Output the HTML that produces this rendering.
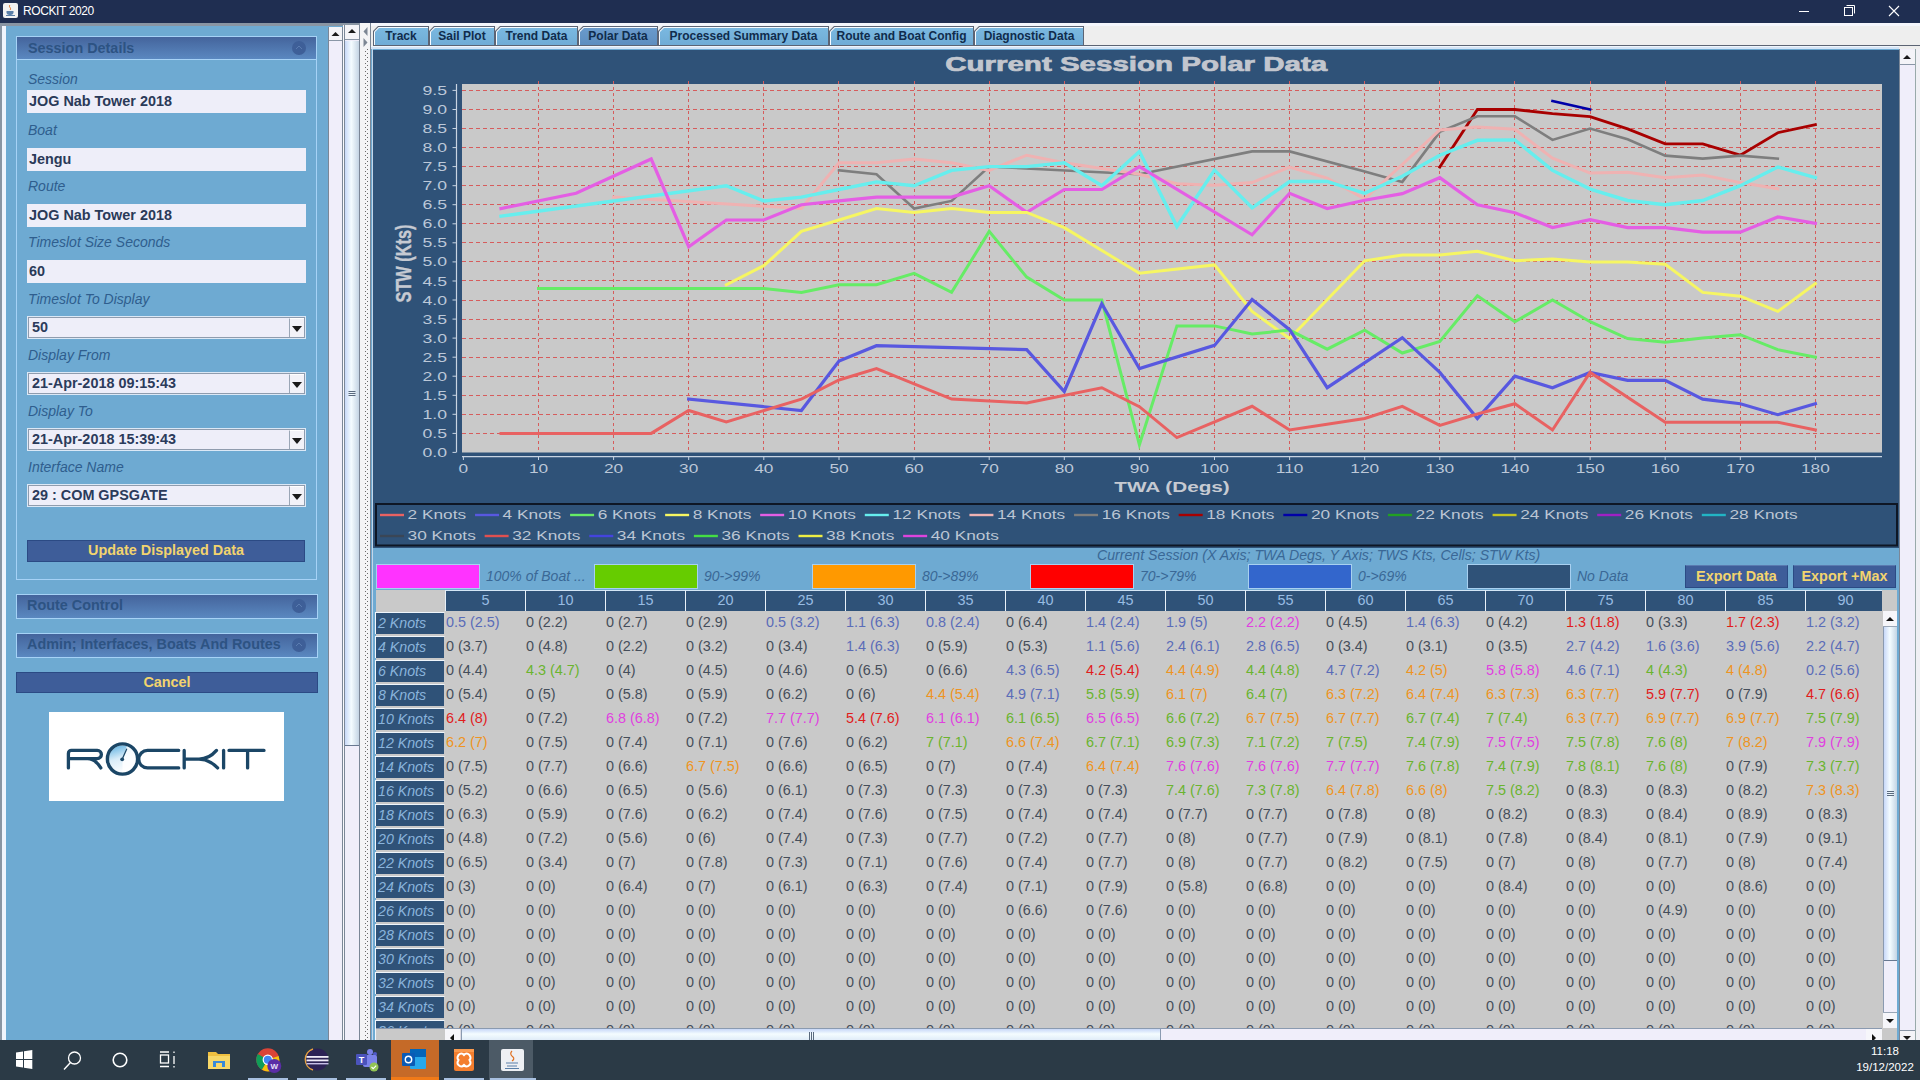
<!DOCTYPE html><html><head><meta charset="utf-8"><style>
html,body{margin:0;padding:0;}
body{width:1920px;height:1080px;overflow:hidden;position:relative;background:#6eaad2;font-family:"Liberation Sans", sans-serif;}
div{box-sizing:border-box;}
</style></head><body>
<div style="position:absolute;left:0px;top:0px;width:1920px;height:23px;background:#1f2e51;"></div>
<div style="position:absolute;left:3px;top:3px;width:15px;height:15px;background:#f2f2f2;border-radius:2px;"><svg width="15" height="15" viewBox="0 0 15 15" style="position:absolute;left:0;top:0"><path d="M7 2 C5 4 9 5 7 7" stroke="#e07020" stroke-width="1" fill="none"/><path d="M3.5 8 h7 v2 a3 3 0 0 1 -3 2 h-1 a3 3 0 0 1 -3 -2z" fill="#5a7fa8"/><path d="M3 12.5 h9" stroke="#5a7fa8" stroke-width="1"/></svg></div>
<div style="position:absolute;left:23px;top:5.14px;font-size:12px;line-height:1;white-space:nowrap;color:#ffffff;letter-spacing:-0.4px;">ROCKIT 2020</div>
<svg width="120" height="23" style="position:absolute;left:1790px;top:0" viewBox="0 0 120 23"><path d="M9 11.5 h10" stroke="#fff" stroke-width="1"/><rect x="54.5" y="7.5" width="8" height="8" fill="none" stroke="#fff" stroke-width="1"/><path d="M56.5 5.5 h8 v8" fill="none" stroke="#fff" stroke-width="1"/><path d="M99 6 l10 10 M109 6 l-10 10" stroke="#fff" stroke-width="1.1"/></svg>
<div style="position:absolute;left:0px;top:23px;width:360px;height:3px;background:#8995a3;"></div>
<div style="position:absolute;left:0px;top:26px;width:2px;height:1014px;background:#8995a3;"></div>
<div style="position:absolute;left:2px;top:26px;width:4px;height:1014px;background:#f0f4fc;"></div>
<div style="position:absolute;left:6px;top:26px;width:322px;height:1014px;background:#6eaad2;"></div>
<div style="position:absolute;left:16px;top:36px;width:301px;height:544px;border:1px solid #a6d2f6;"></div>
<div style="position:absolute;left:17px;top:37px;width:299px;height:23px;background:linear-gradient(#44649c,#5a88c0);border-bottom:1px solid #a6d2f6;"></div>
<div style="position:absolute;left:28px;top:41.47px;font-size:14.4px;line-height:1;white-space:nowrap;font-weight:bold;color:#2d5383;">Session Details</div>
<svg width="16" height="16" style="position:absolute;left:291px;top:40px" viewBox="0 0 16 16"><circle cx="8" cy="8" r="7" fill="#3e5f98"/><path d="M5 9 l3 -3 l3 3" stroke="#5a7cb0" stroke-width="1" fill="none"/></svg>
<div style="position:absolute;left:28px;top:72.33px;font-size:14px;line-height:1;white-space:nowrap;font-style:italic;color:#2f5e8e;">Session</div>
<div style="position:absolute;left:27px;top:90px;width:279px;height:23px;background:#eeeef9;"></div>
<div style="position:absolute;left:29px;top:94.47px;font-size:14.4px;line-height:1;white-space:nowrap;font-weight:bold;color:#2a3a58;">JOG Nab Tower 2018</div>
<div style="position:absolute;left:28px;top:123.33px;font-size:14px;line-height:1;white-space:nowrap;font-style:italic;color:#2f5e8e;">Boat</div>
<div style="position:absolute;left:27px;top:148px;width:279px;height:23px;background:#eeeef9;"></div>
<div style="position:absolute;left:29px;top:152.47px;font-size:14.4px;line-height:1;white-space:nowrap;font-weight:bold;color:#2a3a58;">Jengu</div>
<div style="position:absolute;left:28px;top:179.33px;font-size:14px;line-height:1;white-space:nowrap;font-style:italic;color:#2f5e8e;">Route</div>
<div style="position:absolute;left:27px;top:204px;width:279px;height:23px;background:#eeeef9;"></div>
<div style="position:absolute;left:29px;top:208.47px;font-size:14.4px;line-height:1;white-space:nowrap;font-weight:bold;color:#2a3a58;">JOG Nab Tower 2018</div>
<div style="position:absolute;left:28px;top:235.33px;font-size:14px;line-height:1;white-space:nowrap;font-style:italic;color:#2f5e8e;">Timeslot Size Seconds</div>
<div style="position:absolute;left:27px;top:260px;width:279px;height:23px;background:#eeeef9;"></div>
<div style="position:absolute;left:29px;top:264.47px;font-size:14.4px;line-height:1;white-space:nowrap;font-weight:bold;color:#2a3a58;">60</div>
<div style="position:absolute;left:28px;top:292.33px;font-size:14px;line-height:1;white-space:nowrap;font-style:italic;color:#2f5e8e;">Timeslot To Display</div>
<div style="position:absolute;left:27px;top:316px;width:279px;height:23px;background:#eeeef9;border:1px solid #dbe8f6;"></div>
<div style="position:absolute;left:28px;top:317px;width:277px;height:21px;border:1px solid #8f9cae;"></div>
<div style="position:absolute;left:32px;top:319.97px;font-size:14.4px;line-height:1;white-space:nowrap;font-weight:bold;color:#2b3b5b;">50</div>
<div style="position:absolute;left:289px;top:318px;width:15px;height:19px;background:#f2f2f8;border-left:1px solid #9aa6b6;border-top:1px solid #fff;"><svg width="12" height="8" style="position:absolute;left:1px;top:6px"><path d="M1 1 h10 l-5 6z" fill="#1a1a1a"/></svg></div>
<div style="position:absolute;left:28px;top:348.33px;font-size:14px;line-height:1;white-space:nowrap;font-style:italic;color:#2f5e8e;">Display From</div>
<div style="position:absolute;left:27px;top:372px;width:279px;height:23px;background:#eeeef9;border:1px solid #dbe8f6;"></div>
<div style="position:absolute;left:28px;top:373px;width:277px;height:21px;border:1px solid #8f9cae;"></div>
<div style="position:absolute;left:32px;top:375.97px;font-size:14.4px;line-height:1;white-space:nowrap;font-weight:bold;color:#2b3b5b;">21-Apr-2018 09:15:43</div>
<div style="position:absolute;left:289px;top:374px;width:15px;height:19px;background:#f2f2f8;border-left:1px solid #9aa6b6;border-top:1px solid #fff;"><svg width="12" height="8" style="position:absolute;left:1px;top:6px"><path d="M1 1 h10 l-5 6z" fill="#1a1a1a"/></svg></div>
<div style="position:absolute;left:28px;top:404.33px;font-size:14px;line-height:1;white-space:nowrap;font-style:italic;color:#2f5e8e;">Display To</div>
<div style="position:absolute;left:27px;top:428px;width:279px;height:23px;background:#eeeef9;border:1px solid #dbe8f6;"></div>
<div style="position:absolute;left:28px;top:429px;width:277px;height:21px;border:1px solid #8f9cae;"></div>
<div style="position:absolute;left:32px;top:431.97px;font-size:14.4px;line-height:1;white-space:nowrap;font-weight:bold;color:#2b3b5b;">21-Apr-2018 15:39:43</div>
<div style="position:absolute;left:289px;top:430px;width:15px;height:19px;background:#f2f2f8;border-left:1px solid #9aa6b6;border-top:1px solid #fff;"><svg width="12" height="8" style="position:absolute;left:1px;top:6px"><path d="M1 1 h10 l-5 6z" fill="#1a1a1a"/></svg></div>
<div style="position:absolute;left:28px;top:460.33px;font-size:14px;line-height:1;white-space:nowrap;font-style:italic;color:#2f5e8e;">Interface Name</div>
<div style="position:absolute;left:27px;top:484px;width:279px;height:23px;background:#eeeef9;border:1px solid #dbe8f6;"></div>
<div style="position:absolute;left:28px;top:485px;width:277px;height:21px;border:1px solid #8f9cae;"></div>
<div style="position:absolute;left:32px;top:487.97px;font-size:14.4px;line-height:1;white-space:nowrap;font-weight:bold;color:#2b3b5b;">29 : COM GPSGATE</div>
<div style="position:absolute;left:289px;top:486px;width:15px;height:19px;background:#f2f2f8;border-left:1px solid #9aa6b6;border-top:1px solid #fff;"><svg width="12" height="8" style="position:absolute;left:1px;top:6px"><path d="M1 1 h10 l-5 6z" fill="#1a1a1a"/></svg></div>
<div style="position:absolute;left:27px;top:540px;width:278px;height:22px;background:#3e5d99;border:1px solid #2b4a84;"></div>
<div style="position:absolute;left:27px;top:540px;width:278px;height:22px;line-height:21px;text-align:center;font-size:14.4px;font-weight:bold;color:#f2d46e;">Update Displayed Data</div>
<div style="position:absolute;left:16px;top:594px;width:302px;height:25px;border:1px solid #a6d2f6;background:linear-gradient(#44649c,#5a88c0);"></div>
<div style="position:absolute;left:27px;top:598.47px;font-size:14.4px;line-height:1;white-space:nowrap;font-weight:bold;color:#2d5383;">Route Control</div>
<svg width="16" height="16" style="position:absolute;left:291px;top:598px" viewBox="0 0 16 16"><circle cx="8" cy="8" r="7" fill="#3e5f98"/><path d="M5 9 l3 -3 l3 3" stroke="#5a7cb0" stroke-width="1" fill="none"/></svg>
<div style="position:absolute;left:16px;top:633px;width:302px;height:25px;border:1px solid #a6d2f6;background:linear-gradient(#44649c,#5a88c0);"></div>
<div style="position:absolute;left:27px;top:637.47px;font-size:14.4px;line-height:1;white-space:nowrap;font-weight:bold;color:#2d5383;">Admin; Interfaces, Boats And Routes</div>
<svg width="16" height="16" style="position:absolute;left:291px;top:637px" viewBox="0 0 16 16"><circle cx="8" cy="8" r="7" fill="#3e5f98"/><path d="M5 9 l3 -3 l3 3" stroke="#5a7cb0" stroke-width="1" fill="none"/></svg>
<div style="position:absolute;left:16px;top:672px;width:302px;height:21px;background:#3e5d99;border:1px solid #2b4a84;"></div>
<div style="position:absolute;left:16px;top:672px;width:302px;height:21px;line-height:20px;text-align:center;font-size:14.4px;font-weight:bold;color:#f2d46e;">Cancel</div>
<div style="position:absolute;left:49px;top:712px;width:235px;height:89px;background:#ffffff;"></div>
<svg width="235" height="89" style="position:absolute;left:49px;top:712px" viewBox="0 0 235 89">
<defs><linearGradient id="lg1" x1="0.3" y1="0" x2="0.6" y2="1"><stop offset="0" stop-color="#6cb8e4"/><stop offset="0.45" stop-color="#d8ecf8"/><stop offset="1" stop-color="#ffffff"/></linearGradient></defs>
<circle cx="73.5" cy="47" r="13.5" fill="url(#lg1)"/>
<path d="M73.5 47 L78 33.5 A13.5 13.5 0 0 1 87 47 A13.5 13.5 0 0 1 73.5 60.5z" fill="#ffffff" opacity="0.85"/>
<g fill="none" stroke="#1b4666" stroke-width="3.3" stroke-linecap="round" stroke-linejoin="round">
<path d="M19.4 55.9 V41.4 A3 3 0 0 1 22.4 38.4 H48.3 A4.1 4.1 0 0 1 48.3 46.6 H20.4 M38.5 46.6 Q46 46.6 51.8 55.9"/>
<circle cx="73.5" cy="47" r="15.1" stroke-width="3.4"/>
<path d="M129.7 38.4 H98.5 A8.75 8.75 0 0 0 98.5 55.9 H129.7"/>
<path d="M135.2 38.4 V55.9 M135.2 47.1 H150 Q160 47.1 167.5 38.4 M150 47.1 Q160 47.1 168.6 55.9"/>
<path d="M174.6 38.4 V55.9"/>
<path d="M180 38.4 H215 M198.6 38.4 V55.9"/>
</g>
<path d="M73.2 47.3 L77.6 37.2" stroke="#1d4a6a" stroke-width="1.3" stroke-linecap="round"/>
<circle cx="73.2" cy="47.3" r="1.9" fill="#1d4a6a"/>
</svg>
<div style="position:absolute;left:328px;top:27px;width:15px;height:1013px;background:#f0eefa;border-left:1px solid #7b8797;border-right:1px solid #7b8797;"></div>
<div style="position:absolute;left:329px;top:27px;width:13px;height:14px;background:#f4f4f8;border-bottom:1px solid #8a96a6;"><svg width="13" height="14" style="position:absolute;left:0;top:0"><path d="M2.5 9 h8 l-4 -4z" fill="#1a1a1a"/></svg></div>
<div style="position:absolute;left:343px;top:25px;width:1px;height:1015px;background:#f8f8fc;"></div>
<div style="position:absolute;left:344px;top:25px;width:16px;height:1015px;background:#f0eefa;border-left:1px solid #7b8797;border-right:1px solid #7b8797;"></div>
<div style="position:absolute;left:345px;top:25px;width:14px;height:15px;background:#f4f4f8;border-bottom:1px solid #8a96a6;"><svg width="14" height="15" style="position:absolute;left:0;top:0"><path d="M3 8 h8 l-4 -4z" fill="#1a1a1a"/></svg></div>
<div style="position:absolute;left:345px;top:41px;width:14px;height:705px;background:linear-gradient(90deg,#c8d8f8,#f4fcff 45%,#c4d4e4);border-bottom:1px solid #687890;"><svg width="14" height="8" style="position:absolute;left:0;top:349px"><path d="M3.5 1.5 h7 M3.5 3.5 h7 M3.5 5.5 h7" stroke="#5a6a7e" stroke-width="1"/></svg></div>
<div style="position:absolute;left:347px;top:1033px;width:10px;height:7px;"><svg width="10" height="7"><path d="M1 6 l4 -4 l4 4z" fill="#111"/></svg></div>
<div style="position:absolute;left:360px;top:23px;width:11px;height:1017px;background:#f4f4f6;border-right:1px solid #7b8797;"></div>
<svg width="1920" height="1080" style="position:absolute;left:0;top:0"><rect x="365" y="27" width="1" height="1" fill="#6a6a6a"/><rect x="367" y="29" width="1" height="1" fill="#6a6a6a"/><rect x="365" y="31" width="1" height="1" fill="#6a6a6a"/><rect x="367" y="33" width="1" height="1" fill="#6a6a6a"/><rect x="365" y="35" width="1" height="1" fill="#6a6a6a"/><rect x="367" y="37" width="1" height="1" fill="#6a6a6a"/><rect x="365" y="39" width="1" height="1" fill="#6a6a6a"/><rect x="367" y="41" width="1" height="1" fill="#6a6a6a"/><rect x="365" y="43" width="1" height="1" fill="#6a6a6a"/><rect x="367" y="45" width="1" height="1" fill="#6a6a6a"/><rect x="365" y="47" width="1" height="1" fill="#6a6a6a"/><rect x="367" y="49" width="1" height="1" fill="#6a6a6a"/><rect x="365" y="51" width="1" height="1" fill="#6a6a6a"/><rect x="367" y="53" width="1" height="1" fill="#6a6a6a"/><rect x="365" y="55" width="1" height="1" fill="#6a6a6a"/><rect x="367" y="57" width="1" height="1" fill="#6a6a6a"/><rect x="365" y="59" width="1" height="1" fill="#6a6a6a"/><rect x="367" y="61" width="1" height="1" fill="#6a6a6a"/><rect x="365" y="63" width="1" height="1" fill="#6a6a6a"/><rect x="367" y="65" width="1" height="1" fill="#6a6a6a"/><rect x="365" y="67" width="1" height="1" fill="#6a6a6a"/><rect x="367" y="69" width="1" height="1" fill="#6a6a6a"/><rect x="365" y="71" width="1" height="1" fill="#6a6a6a"/><rect x="367" y="73" width="1" height="1" fill="#6a6a6a"/><rect x="365" y="75" width="1" height="1" fill="#6a6a6a"/><rect x="367" y="77" width="1" height="1" fill="#6a6a6a"/><rect x="365" y="79" width="1" height="1" fill="#6a6a6a"/><rect x="367" y="81" width="1" height="1" fill="#6a6a6a"/><rect x="365" y="83" width="1" height="1" fill="#6a6a6a"/><rect x="367" y="85" width="1" height="1" fill="#6a6a6a"/><rect x="365" y="87" width="1" height="1" fill="#6a6a6a"/><rect x="367" y="89" width="1" height="1" fill="#6a6a6a"/><rect x="365" y="91" width="1" height="1" fill="#6a6a6a"/><rect x="367" y="93" width="1" height="1" fill="#6a6a6a"/><rect x="365" y="95" width="1" height="1" fill="#6a6a6a"/><rect x="367" y="97" width="1" height="1" fill="#6a6a6a"/><rect x="365" y="99" width="1" height="1" fill="#6a6a6a"/><rect x="367" y="101" width="1" height="1" fill="#6a6a6a"/><rect x="365" y="103" width="1" height="1" fill="#6a6a6a"/><rect x="367" y="105" width="1" height="1" fill="#6a6a6a"/><rect x="365" y="107" width="1" height="1" fill="#6a6a6a"/><rect x="367" y="109" width="1" height="1" fill="#6a6a6a"/><rect x="365" y="111" width="1" height="1" fill="#6a6a6a"/><rect x="367" y="113" width="1" height="1" fill="#6a6a6a"/><rect x="365" y="115" width="1" height="1" fill="#6a6a6a"/><rect x="367" y="117" width="1" height="1" fill="#6a6a6a"/><rect x="365" y="119" width="1" height="1" fill="#6a6a6a"/><rect x="367" y="121" width="1" height="1" fill="#6a6a6a"/><rect x="365" y="123" width="1" height="1" fill="#6a6a6a"/><rect x="367" y="125" width="1" height="1" fill="#6a6a6a"/><rect x="365" y="127" width="1" height="1" fill="#6a6a6a"/><rect x="367" y="129" width="1" height="1" fill="#6a6a6a"/><rect x="365" y="131" width="1" height="1" fill="#6a6a6a"/><rect x="367" y="133" width="1" height="1" fill="#6a6a6a"/><rect x="365" y="135" width="1" height="1" fill="#6a6a6a"/><rect x="367" y="137" width="1" height="1" fill="#6a6a6a"/><rect x="365" y="139" width="1" height="1" fill="#6a6a6a"/><rect x="367" y="141" width="1" height="1" fill="#6a6a6a"/><rect x="365" y="143" width="1" height="1" fill="#6a6a6a"/><rect x="367" y="145" width="1" height="1" fill="#6a6a6a"/><rect x="365" y="147" width="1" height="1" fill="#6a6a6a"/><rect x="367" y="149" width="1" height="1" fill="#6a6a6a"/><rect x="365" y="151" width="1" height="1" fill="#6a6a6a"/><rect x="367" y="153" width="1" height="1" fill="#6a6a6a"/><rect x="365" y="155" width="1" height="1" fill="#6a6a6a"/><rect x="367" y="157" width="1" height="1" fill="#6a6a6a"/><rect x="365" y="159" width="1" height="1" fill="#6a6a6a"/><rect x="367" y="161" width="1" height="1" fill="#6a6a6a"/><rect x="365" y="163" width="1" height="1" fill="#6a6a6a"/><rect x="367" y="165" width="1" height="1" fill="#6a6a6a"/><rect x="365" y="167" width="1" height="1" fill="#6a6a6a"/><rect x="367" y="169" width="1" height="1" fill="#6a6a6a"/><rect x="365" y="171" width="1" height="1" fill="#6a6a6a"/><rect x="367" y="173" width="1" height="1" fill="#6a6a6a"/><rect x="365" y="175" width="1" height="1" fill="#6a6a6a"/><rect x="367" y="177" width="1" height="1" fill="#6a6a6a"/><rect x="365" y="179" width="1" height="1" fill="#6a6a6a"/><rect x="367" y="181" width="1" height="1" fill="#6a6a6a"/><rect x="365" y="183" width="1" height="1" fill="#6a6a6a"/><rect x="367" y="185" width="1" height="1" fill="#6a6a6a"/><rect x="365" y="187" width="1" height="1" fill="#6a6a6a"/><rect x="367" y="189" width="1" height="1" fill="#6a6a6a"/><rect x="365" y="191" width="1" height="1" fill="#6a6a6a"/><rect x="367" y="193" width="1" height="1" fill="#6a6a6a"/><rect x="365" y="195" width="1" height="1" fill="#6a6a6a"/><rect x="367" y="197" width="1" height="1" fill="#6a6a6a"/><rect x="365" y="199" width="1" height="1" fill="#6a6a6a"/><rect x="367" y="201" width="1" height="1" fill="#6a6a6a"/><rect x="365" y="203" width="1" height="1" fill="#6a6a6a"/><rect x="367" y="205" width="1" height="1" fill="#6a6a6a"/><rect x="365" y="207" width="1" height="1" fill="#6a6a6a"/><rect x="367" y="209" width="1" height="1" fill="#6a6a6a"/><rect x="365" y="211" width="1" height="1" fill="#6a6a6a"/><rect x="367" y="213" width="1" height="1" fill="#6a6a6a"/><rect x="365" y="215" width="1" height="1" fill="#6a6a6a"/><rect x="367" y="217" width="1" height="1" fill="#6a6a6a"/><rect x="365" y="219" width="1" height="1" fill="#6a6a6a"/><rect x="367" y="221" width="1" height="1" fill="#6a6a6a"/><rect x="365" y="223" width="1" height="1" fill="#6a6a6a"/><rect x="367" y="225" width="1" height="1" fill="#6a6a6a"/><rect x="365" y="227" width="1" height="1" fill="#6a6a6a"/><rect x="367" y="229" width="1" height="1" fill="#6a6a6a"/><rect x="365" y="231" width="1" height="1" fill="#6a6a6a"/><rect x="367" y="233" width="1" height="1" fill="#6a6a6a"/><rect x="365" y="235" width="1" height="1" fill="#6a6a6a"/><rect x="367" y="237" width="1" height="1" fill="#6a6a6a"/><rect x="365" y="239" width="1" height="1" fill="#6a6a6a"/><rect x="367" y="241" width="1" height="1" fill="#6a6a6a"/><rect x="365" y="243" width="1" height="1" fill="#6a6a6a"/><rect x="367" y="245" width="1" height="1" fill="#6a6a6a"/><rect x="365" y="247" width="1" height="1" fill="#6a6a6a"/><rect x="367" y="249" width="1" height="1" fill="#6a6a6a"/><rect x="365" y="251" width="1" height="1" fill="#6a6a6a"/><rect x="367" y="253" width="1" height="1" fill="#6a6a6a"/><rect x="365" y="255" width="1" height="1" fill="#6a6a6a"/><rect x="367" y="257" width="1" height="1" fill="#6a6a6a"/><rect x="365" y="259" width="1" height="1" fill="#6a6a6a"/><rect x="367" y="261" width="1" height="1" fill="#6a6a6a"/><rect x="365" y="263" width="1" height="1" fill="#6a6a6a"/><rect x="367" y="265" width="1" height="1" fill="#6a6a6a"/><rect x="365" y="267" width="1" height="1" fill="#6a6a6a"/><rect x="367" y="269" width="1" height="1" fill="#6a6a6a"/><rect x="365" y="271" width="1" height="1" fill="#6a6a6a"/><rect x="367" y="273" width="1" height="1" fill="#6a6a6a"/><rect x="365" y="275" width="1" height="1" fill="#6a6a6a"/><rect x="367" y="277" width="1" height="1" fill="#6a6a6a"/><rect x="365" y="279" width="1" height="1" fill="#6a6a6a"/><rect x="367" y="281" width="1" height="1" fill="#6a6a6a"/><rect x="365" y="283" width="1" height="1" fill="#6a6a6a"/><rect x="367" y="285" width="1" height="1" fill="#6a6a6a"/><rect x="365" y="287" width="1" height="1" fill="#6a6a6a"/><rect x="367" y="289" width="1" height="1" fill="#6a6a6a"/><rect x="365" y="291" width="1" height="1" fill="#6a6a6a"/><rect x="367" y="293" width="1" height="1" fill="#6a6a6a"/><rect x="365" y="295" width="1" height="1" fill="#6a6a6a"/><rect x="367" y="297" width="1" height="1" fill="#6a6a6a"/><rect x="365" y="299" width="1" height="1" fill="#6a6a6a"/><rect x="367" y="301" width="1" height="1" fill="#6a6a6a"/><rect x="365" y="303" width="1" height="1" fill="#6a6a6a"/><rect x="367" y="305" width="1" height="1" fill="#6a6a6a"/><rect x="365" y="307" width="1" height="1" fill="#6a6a6a"/><rect x="367" y="309" width="1" height="1" fill="#6a6a6a"/><rect x="365" y="311" width="1" height="1" fill="#6a6a6a"/><rect x="367" y="313" width="1" height="1" fill="#6a6a6a"/><rect x="365" y="315" width="1" height="1" fill="#6a6a6a"/><rect x="367" y="317" width="1" height="1" fill="#6a6a6a"/><rect x="365" y="319" width="1" height="1" fill="#6a6a6a"/><rect x="367" y="321" width="1" height="1" fill="#6a6a6a"/><rect x="365" y="323" width="1" height="1" fill="#6a6a6a"/><rect x="367" y="325" width="1" height="1" fill="#6a6a6a"/><rect x="365" y="327" width="1" height="1" fill="#6a6a6a"/><rect x="367" y="329" width="1" height="1" fill="#6a6a6a"/><rect x="365" y="331" width="1" height="1" fill="#6a6a6a"/><rect x="367" y="333" width="1" height="1" fill="#6a6a6a"/><rect x="365" y="335" width="1" height="1" fill="#6a6a6a"/><rect x="367" y="337" width="1" height="1" fill="#6a6a6a"/><rect x="365" y="339" width="1" height="1" fill="#6a6a6a"/><rect x="367" y="341" width="1" height="1" fill="#6a6a6a"/><rect x="365" y="343" width="1" height="1" fill="#6a6a6a"/><rect x="367" y="345" width="1" height="1" fill="#6a6a6a"/><rect x="365" y="347" width="1" height="1" fill="#6a6a6a"/><rect x="367" y="349" width="1" height="1" fill="#6a6a6a"/><rect x="365" y="351" width="1" height="1" fill="#6a6a6a"/><rect x="367" y="353" width="1" height="1" fill="#6a6a6a"/><rect x="365" y="355" width="1" height="1" fill="#6a6a6a"/><rect x="367" y="357" width="1" height="1" fill="#6a6a6a"/><rect x="365" y="359" width="1" height="1" fill="#6a6a6a"/><rect x="367" y="361" width="1" height="1" fill="#6a6a6a"/><rect x="365" y="363" width="1" height="1" fill="#6a6a6a"/><rect x="367" y="365" width="1" height="1" fill="#6a6a6a"/><rect x="365" y="367" width="1" height="1" fill="#6a6a6a"/><rect x="367" y="369" width="1" height="1" fill="#6a6a6a"/><rect x="365" y="371" width="1" height="1" fill="#6a6a6a"/><rect x="367" y="373" width="1" height="1" fill="#6a6a6a"/><rect x="365" y="375" width="1" height="1" fill="#6a6a6a"/><rect x="367" y="377" width="1" height="1" fill="#6a6a6a"/><rect x="365" y="379" width="1" height="1" fill="#6a6a6a"/><rect x="367" y="381" width="1" height="1" fill="#6a6a6a"/><rect x="365" y="383" width="1" height="1" fill="#6a6a6a"/><rect x="367" y="385" width="1" height="1" fill="#6a6a6a"/><rect x="365" y="387" width="1" height="1" fill="#6a6a6a"/><rect x="367" y="389" width="1" height="1" fill="#6a6a6a"/><rect x="365" y="391" width="1" height="1" fill="#6a6a6a"/><rect x="367" y="393" width="1" height="1" fill="#6a6a6a"/><rect x="365" y="395" width="1" height="1" fill="#6a6a6a"/><rect x="367" y="397" width="1" height="1" fill="#6a6a6a"/><rect x="365" y="399" width="1" height="1" fill="#6a6a6a"/><rect x="367" y="401" width="1" height="1" fill="#6a6a6a"/><rect x="365" y="403" width="1" height="1" fill="#6a6a6a"/><rect x="367" y="405" width="1" height="1" fill="#6a6a6a"/><rect x="365" y="407" width="1" height="1" fill="#6a6a6a"/><rect x="367" y="409" width="1" height="1" fill="#6a6a6a"/><rect x="365" y="411" width="1" height="1" fill="#6a6a6a"/><rect x="367" y="413" width="1" height="1" fill="#6a6a6a"/><rect x="365" y="415" width="1" height="1" fill="#6a6a6a"/><rect x="367" y="417" width="1" height="1" fill="#6a6a6a"/><rect x="365" y="419" width="1" height="1" fill="#6a6a6a"/><rect x="367" y="421" width="1" height="1" fill="#6a6a6a"/><rect x="365" y="423" width="1" height="1" fill="#6a6a6a"/><rect x="367" y="425" width="1" height="1" fill="#6a6a6a"/><rect x="365" y="427" width="1" height="1" fill="#6a6a6a"/><rect x="367" y="429" width="1" height="1" fill="#6a6a6a"/><rect x="365" y="431" width="1" height="1" fill="#6a6a6a"/><rect x="367" y="433" width="1" height="1" fill="#6a6a6a"/><rect x="365" y="435" width="1" height="1" fill="#6a6a6a"/><rect x="367" y="437" width="1" height="1" fill="#6a6a6a"/><rect x="365" y="439" width="1" height="1" fill="#6a6a6a"/><rect x="367" y="441" width="1" height="1" fill="#6a6a6a"/><rect x="365" y="443" width="1" height="1" fill="#6a6a6a"/><rect x="367" y="445" width="1" height="1" fill="#6a6a6a"/><rect x="365" y="447" width="1" height="1" fill="#6a6a6a"/><rect x="367" y="449" width="1" height="1" fill="#6a6a6a"/><rect x="365" y="451" width="1" height="1" fill="#6a6a6a"/><rect x="367" y="453" width="1" height="1" fill="#6a6a6a"/><rect x="365" y="455" width="1" height="1" fill="#6a6a6a"/><rect x="367" y="457" width="1" height="1" fill="#6a6a6a"/><rect x="365" y="459" width="1" height="1" fill="#6a6a6a"/><rect x="367" y="461" width="1" height="1" fill="#6a6a6a"/><rect x="365" y="463" width="1" height="1" fill="#6a6a6a"/><rect x="367" y="465" width="1" height="1" fill="#6a6a6a"/><rect x="365" y="467" width="1" height="1" fill="#6a6a6a"/><rect x="367" y="469" width="1" height="1" fill="#6a6a6a"/><rect x="365" y="471" width="1" height="1" fill="#6a6a6a"/><rect x="367" y="473" width="1" height="1" fill="#6a6a6a"/><rect x="365" y="475" width="1" height="1" fill="#6a6a6a"/><rect x="367" y="477" width="1" height="1" fill="#6a6a6a"/><rect x="365" y="479" width="1" height="1" fill="#6a6a6a"/><rect x="367" y="481" width="1" height="1" fill="#6a6a6a"/><rect x="365" y="483" width="1" height="1" fill="#6a6a6a"/><rect x="367" y="485" width="1" height="1" fill="#6a6a6a"/><rect x="365" y="487" width="1" height="1" fill="#6a6a6a"/><rect x="367" y="489" width="1" height="1" fill="#6a6a6a"/><rect x="365" y="491" width="1" height="1" fill="#6a6a6a"/><rect x="367" y="493" width="1" height="1" fill="#6a6a6a"/><rect x="365" y="495" width="1" height="1" fill="#6a6a6a"/><rect x="367" y="497" width="1" height="1" fill="#6a6a6a"/><rect x="365" y="499" width="1" height="1" fill="#6a6a6a"/><rect x="367" y="501" width="1" height="1" fill="#6a6a6a"/><rect x="365" y="503" width="1" height="1" fill="#6a6a6a"/><rect x="367" y="505" width="1" height="1" fill="#6a6a6a"/><rect x="365" y="507" width="1" height="1" fill="#6a6a6a"/><rect x="367" y="509" width="1" height="1" fill="#6a6a6a"/><rect x="365" y="511" width="1" height="1" fill="#6a6a6a"/><rect x="367" y="513" width="1" height="1" fill="#6a6a6a"/><rect x="365" y="515" width="1" height="1" fill="#6a6a6a"/><rect x="367" y="517" width="1" height="1" fill="#6a6a6a"/><rect x="365" y="519" width="1" height="1" fill="#6a6a6a"/><rect x="367" y="521" width="1" height="1" fill="#6a6a6a"/><rect x="365" y="523" width="1" height="1" fill="#6a6a6a"/><rect x="367" y="525" width="1" height="1" fill="#6a6a6a"/><rect x="365" y="527" width="1" height="1" fill="#6a6a6a"/><rect x="367" y="529" width="1" height="1" fill="#6a6a6a"/><rect x="365" y="531" width="1" height="1" fill="#6a6a6a"/><rect x="367" y="533" width="1" height="1" fill="#6a6a6a"/><rect x="365" y="535" width="1" height="1" fill="#6a6a6a"/><rect x="367" y="537" width="1" height="1" fill="#6a6a6a"/><rect x="365" y="539" width="1" height="1" fill="#6a6a6a"/><rect x="367" y="541" width="1" height="1" fill="#6a6a6a"/><rect x="365" y="543" width="1" height="1" fill="#6a6a6a"/><rect x="367" y="545" width="1" height="1" fill="#6a6a6a"/><rect x="365" y="547" width="1" height="1" fill="#6a6a6a"/><rect x="367" y="549" width="1" height="1" fill="#6a6a6a"/><rect x="365" y="551" width="1" height="1" fill="#6a6a6a"/><rect x="367" y="553" width="1" height="1" fill="#6a6a6a"/><rect x="365" y="555" width="1" height="1" fill="#6a6a6a"/><rect x="367" y="557" width="1" height="1" fill="#6a6a6a"/><rect x="365" y="559" width="1" height="1" fill="#6a6a6a"/><rect x="367" y="561" width="1" height="1" fill="#6a6a6a"/><rect x="365" y="563" width="1" height="1" fill="#6a6a6a"/><rect x="367" y="565" width="1" height="1" fill="#6a6a6a"/><rect x="365" y="567" width="1" height="1" fill="#6a6a6a"/><rect x="367" y="569" width="1" height="1" fill="#6a6a6a"/><rect x="365" y="571" width="1" height="1" fill="#6a6a6a"/><rect x="367" y="573" width="1" height="1" fill="#6a6a6a"/><rect x="365" y="575" width="1" height="1" fill="#6a6a6a"/><rect x="367" y="577" width="1" height="1" fill="#6a6a6a"/><rect x="365" y="579" width="1" height="1" fill="#6a6a6a"/><rect x="367" y="581" width="1" height="1" fill="#6a6a6a"/><rect x="365" y="583" width="1" height="1" fill="#6a6a6a"/><rect x="367" y="585" width="1" height="1" fill="#6a6a6a"/><rect x="365" y="587" width="1" height="1" fill="#6a6a6a"/><rect x="367" y="589" width="1" height="1" fill="#6a6a6a"/><rect x="365" y="591" width="1" height="1" fill="#6a6a6a"/><rect x="367" y="593" width="1" height="1" fill="#6a6a6a"/><rect x="365" y="595" width="1" height="1" fill="#6a6a6a"/><rect x="367" y="597" width="1" height="1" fill="#6a6a6a"/><rect x="365" y="599" width="1" height="1" fill="#6a6a6a"/><rect x="367" y="601" width="1" height="1" fill="#6a6a6a"/><rect x="365" y="603" width="1" height="1" fill="#6a6a6a"/><rect x="367" y="605" width="1" height="1" fill="#6a6a6a"/><rect x="365" y="607" width="1" height="1" fill="#6a6a6a"/><rect x="367" y="609" width="1" height="1" fill="#6a6a6a"/><rect x="365" y="611" width="1" height="1" fill="#6a6a6a"/><rect x="367" y="613" width="1" height="1" fill="#6a6a6a"/><rect x="365" y="615" width="1" height="1" fill="#6a6a6a"/><rect x="367" y="617" width="1" height="1" fill="#6a6a6a"/><rect x="365" y="619" width="1" height="1" fill="#6a6a6a"/><rect x="367" y="621" width="1" height="1" fill="#6a6a6a"/><rect x="365" y="623" width="1" height="1" fill="#6a6a6a"/><rect x="367" y="625" width="1" height="1" fill="#6a6a6a"/><rect x="365" y="627" width="1" height="1" fill="#6a6a6a"/><rect x="367" y="629" width="1" height="1" fill="#6a6a6a"/><rect x="365" y="631" width="1" height="1" fill="#6a6a6a"/><rect x="367" y="633" width="1" height="1" fill="#6a6a6a"/><rect x="365" y="635" width="1" height="1" fill="#6a6a6a"/><rect x="367" y="637" width="1" height="1" fill="#6a6a6a"/><rect x="365" y="639" width="1" height="1" fill="#6a6a6a"/><rect x="367" y="641" width="1" height="1" fill="#6a6a6a"/><rect x="365" y="643" width="1" height="1" fill="#6a6a6a"/><rect x="367" y="645" width="1" height="1" fill="#6a6a6a"/><rect x="365" y="647" width="1" height="1" fill="#6a6a6a"/><rect x="367" y="649" width="1" height="1" fill="#6a6a6a"/><rect x="365" y="651" width="1" height="1" fill="#6a6a6a"/><rect x="367" y="653" width="1" height="1" fill="#6a6a6a"/><rect x="365" y="655" width="1" height="1" fill="#6a6a6a"/><rect x="367" y="657" width="1" height="1" fill="#6a6a6a"/><rect x="365" y="659" width="1" height="1" fill="#6a6a6a"/><rect x="367" y="661" width="1" height="1" fill="#6a6a6a"/><rect x="365" y="663" width="1" height="1" fill="#6a6a6a"/><rect x="367" y="665" width="1" height="1" fill="#6a6a6a"/><rect x="365" y="667" width="1" height="1" fill="#6a6a6a"/><rect x="367" y="669" width="1" height="1" fill="#6a6a6a"/><rect x="365" y="671" width="1" height="1" fill="#6a6a6a"/><rect x="367" y="673" width="1" height="1" fill="#6a6a6a"/><rect x="365" y="675" width="1" height="1" fill="#6a6a6a"/><rect x="367" y="677" width="1" height="1" fill="#6a6a6a"/><rect x="365" y="679" width="1" height="1" fill="#6a6a6a"/><rect x="367" y="681" width="1" height="1" fill="#6a6a6a"/><rect x="365" y="683" width="1" height="1" fill="#6a6a6a"/><rect x="367" y="685" width="1" height="1" fill="#6a6a6a"/><rect x="365" y="687" width="1" height="1" fill="#6a6a6a"/><rect x="367" y="689" width="1" height="1" fill="#6a6a6a"/><rect x="365" y="691" width="1" height="1" fill="#6a6a6a"/><rect x="367" y="693" width="1" height="1" fill="#6a6a6a"/><rect x="365" y="695" width="1" height="1" fill="#6a6a6a"/><rect x="367" y="697" width="1" height="1" fill="#6a6a6a"/><rect x="365" y="699" width="1" height="1" fill="#6a6a6a"/><rect x="367" y="701" width="1" height="1" fill="#6a6a6a"/><rect x="365" y="703" width="1" height="1" fill="#6a6a6a"/><rect x="367" y="705" width="1" height="1" fill="#6a6a6a"/><rect x="365" y="707" width="1" height="1" fill="#6a6a6a"/><rect x="367" y="709" width="1" height="1" fill="#6a6a6a"/><rect x="365" y="711" width="1" height="1" fill="#6a6a6a"/><rect x="367" y="713" width="1" height="1" fill="#6a6a6a"/><rect x="365" y="715" width="1" height="1" fill="#6a6a6a"/><rect x="367" y="717" width="1" height="1" fill="#6a6a6a"/><rect x="365" y="719" width="1" height="1" fill="#6a6a6a"/><rect x="367" y="721" width="1" height="1" fill="#6a6a6a"/><rect x="365" y="723" width="1" height="1" fill="#6a6a6a"/><rect x="367" y="725" width="1" height="1" fill="#6a6a6a"/><rect x="365" y="727" width="1" height="1" fill="#6a6a6a"/><rect x="367" y="729" width="1" height="1" fill="#6a6a6a"/><rect x="365" y="731" width="1" height="1" fill="#6a6a6a"/><rect x="367" y="733" width="1" height="1" fill="#6a6a6a"/><rect x="365" y="735" width="1" height="1" fill="#6a6a6a"/><rect x="367" y="737" width="1" height="1" fill="#6a6a6a"/><rect x="365" y="739" width="1" height="1" fill="#6a6a6a"/><rect x="367" y="741" width="1" height="1" fill="#6a6a6a"/><rect x="365" y="743" width="1" height="1" fill="#6a6a6a"/><rect x="367" y="745" width="1" height="1" fill="#6a6a6a"/><rect x="365" y="747" width="1" height="1" fill="#6a6a6a"/><rect x="367" y="749" width="1" height="1" fill="#6a6a6a"/><rect x="365" y="751" width="1" height="1" fill="#6a6a6a"/><rect x="367" y="753" width="1" height="1" fill="#6a6a6a"/><rect x="365" y="755" width="1" height="1" fill="#6a6a6a"/><rect x="367" y="757" width="1" height="1" fill="#6a6a6a"/><rect x="365" y="759" width="1" height="1" fill="#6a6a6a"/><rect x="367" y="761" width="1" height="1" fill="#6a6a6a"/><rect x="365" y="763" width="1" height="1" fill="#6a6a6a"/><rect x="367" y="765" width="1" height="1" fill="#6a6a6a"/><rect x="365" y="767" width="1" height="1" fill="#6a6a6a"/><rect x="367" y="769" width="1" height="1" fill="#6a6a6a"/><rect x="365" y="771" width="1" height="1" fill="#6a6a6a"/><rect x="367" y="773" width="1" height="1" fill="#6a6a6a"/><rect x="365" y="775" width="1" height="1" fill="#6a6a6a"/><rect x="367" y="777" width="1" height="1" fill="#6a6a6a"/><rect x="365" y="779" width="1" height="1" fill="#6a6a6a"/><rect x="367" y="781" width="1" height="1" fill="#6a6a6a"/><rect x="365" y="783" width="1" height="1" fill="#6a6a6a"/><rect x="367" y="785" width="1" height="1" fill="#6a6a6a"/><rect x="365" y="787" width="1" height="1" fill="#6a6a6a"/><rect x="367" y="789" width="1" height="1" fill="#6a6a6a"/><rect x="365" y="791" width="1" height="1" fill="#6a6a6a"/><rect x="367" y="793" width="1" height="1" fill="#6a6a6a"/><rect x="365" y="795" width="1" height="1" fill="#6a6a6a"/><rect x="367" y="797" width="1" height="1" fill="#6a6a6a"/><rect x="365" y="799" width="1" height="1" fill="#6a6a6a"/><rect x="367" y="801" width="1" height="1" fill="#6a6a6a"/><rect x="365" y="803" width="1" height="1" fill="#6a6a6a"/><rect x="367" y="805" width="1" height="1" fill="#6a6a6a"/><rect x="365" y="807" width="1" height="1" fill="#6a6a6a"/><rect x="367" y="809" width="1" height="1" fill="#6a6a6a"/><rect x="365" y="811" width="1" height="1" fill="#6a6a6a"/><rect x="367" y="813" width="1" height="1" fill="#6a6a6a"/><rect x="365" y="815" width="1" height="1" fill="#6a6a6a"/><rect x="367" y="817" width="1" height="1" fill="#6a6a6a"/><rect x="365" y="819" width="1" height="1" fill="#6a6a6a"/><rect x="367" y="821" width="1" height="1" fill="#6a6a6a"/><rect x="365" y="823" width="1" height="1" fill="#6a6a6a"/><rect x="367" y="825" width="1" height="1" fill="#6a6a6a"/><rect x="365" y="827" width="1" height="1" fill="#6a6a6a"/><rect x="367" y="829" width="1" height="1" fill="#6a6a6a"/><rect x="365" y="831" width="1" height="1" fill="#6a6a6a"/><rect x="367" y="833" width="1" height="1" fill="#6a6a6a"/><rect x="365" y="835" width="1" height="1" fill="#6a6a6a"/><rect x="367" y="837" width="1" height="1" fill="#6a6a6a"/><rect x="365" y="839" width="1" height="1" fill="#6a6a6a"/><rect x="367" y="841" width="1" height="1" fill="#6a6a6a"/><rect x="365" y="843" width="1" height="1" fill="#6a6a6a"/><rect x="367" y="845" width="1" height="1" fill="#6a6a6a"/><rect x="365" y="847" width="1" height="1" fill="#6a6a6a"/><rect x="367" y="849" width="1" height="1" fill="#6a6a6a"/><rect x="365" y="851" width="1" height="1" fill="#6a6a6a"/><rect x="367" y="853" width="1" height="1" fill="#6a6a6a"/><rect x="365" y="855" width="1" height="1" fill="#6a6a6a"/><rect x="367" y="857" width="1" height="1" fill="#6a6a6a"/><rect x="365" y="859" width="1" height="1" fill="#6a6a6a"/><rect x="367" y="861" width="1" height="1" fill="#6a6a6a"/><rect x="365" y="863" width="1" height="1" fill="#6a6a6a"/><rect x="367" y="865" width="1" height="1" fill="#6a6a6a"/><rect x="365" y="867" width="1" height="1" fill="#6a6a6a"/><rect x="367" y="869" width="1" height="1" fill="#6a6a6a"/><rect x="365" y="871" width="1" height="1" fill="#6a6a6a"/><rect x="367" y="873" width="1" height="1" fill="#6a6a6a"/><rect x="365" y="875" width="1" height="1" fill="#6a6a6a"/><rect x="367" y="877" width="1" height="1" fill="#6a6a6a"/><rect x="365" y="879" width="1" height="1" fill="#6a6a6a"/><rect x="367" y="881" width="1" height="1" fill="#6a6a6a"/><rect x="365" y="883" width="1" height="1" fill="#6a6a6a"/><rect x="367" y="885" width="1" height="1" fill="#6a6a6a"/><rect x="365" y="887" width="1" height="1" fill="#6a6a6a"/><rect x="367" y="889" width="1" height="1" fill="#6a6a6a"/><rect x="365" y="891" width="1" height="1" fill="#6a6a6a"/><rect x="367" y="893" width="1" height="1" fill="#6a6a6a"/><rect x="365" y="895" width="1" height="1" fill="#6a6a6a"/><rect x="367" y="897" width="1" height="1" fill="#6a6a6a"/><rect x="365" y="899" width="1" height="1" fill="#6a6a6a"/><rect x="367" y="901" width="1" height="1" fill="#6a6a6a"/><rect x="365" y="903" width="1" height="1" fill="#6a6a6a"/><rect x="367" y="905" width="1" height="1" fill="#6a6a6a"/><rect x="365" y="907" width="1" height="1" fill="#6a6a6a"/><rect x="367" y="909" width="1" height="1" fill="#6a6a6a"/><rect x="365" y="911" width="1" height="1" fill="#6a6a6a"/><rect x="367" y="913" width="1" height="1" fill="#6a6a6a"/><rect x="365" y="915" width="1" height="1" fill="#6a6a6a"/><rect x="367" y="917" width="1" height="1" fill="#6a6a6a"/><rect x="365" y="919" width="1" height="1" fill="#6a6a6a"/><rect x="367" y="921" width="1" height="1" fill="#6a6a6a"/><rect x="365" y="923" width="1" height="1" fill="#6a6a6a"/><rect x="367" y="925" width="1" height="1" fill="#6a6a6a"/><rect x="365" y="927" width="1" height="1" fill="#6a6a6a"/><rect x="367" y="929" width="1" height="1" fill="#6a6a6a"/><rect x="365" y="931" width="1" height="1" fill="#6a6a6a"/><rect x="367" y="933" width="1" height="1" fill="#6a6a6a"/><rect x="365" y="935" width="1" height="1" fill="#6a6a6a"/><rect x="367" y="937" width="1" height="1" fill="#6a6a6a"/><rect x="365" y="939" width="1" height="1" fill="#6a6a6a"/><rect x="367" y="941" width="1" height="1" fill="#6a6a6a"/><rect x="365" y="943" width="1" height="1" fill="#6a6a6a"/><rect x="367" y="945" width="1" height="1" fill="#6a6a6a"/><rect x="365" y="947" width="1" height="1" fill="#6a6a6a"/><rect x="367" y="949" width="1" height="1" fill="#6a6a6a"/><rect x="365" y="951" width="1" height="1" fill="#6a6a6a"/><rect x="367" y="953" width="1" height="1" fill="#6a6a6a"/><rect x="365" y="955" width="1" height="1" fill="#6a6a6a"/><rect x="367" y="957" width="1" height="1" fill="#6a6a6a"/><rect x="365" y="959" width="1" height="1" fill="#6a6a6a"/><rect x="367" y="961" width="1" height="1" fill="#6a6a6a"/><rect x="365" y="963" width="1" height="1" fill="#6a6a6a"/><rect x="367" y="965" width="1" height="1" fill="#6a6a6a"/><rect x="365" y="967" width="1" height="1" fill="#6a6a6a"/><rect x="367" y="969" width="1" height="1" fill="#6a6a6a"/><rect x="365" y="971" width="1" height="1" fill="#6a6a6a"/><rect x="367" y="973" width="1" height="1" fill="#6a6a6a"/><rect x="365" y="975" width="1" height="1" fill="#6a6a6a"/><rect x="367" y="977" width="1" height="1" fill="#6a6a6a"/><rect x="365" y="979" width="1" height="1" fill="#6a6a6a"/><rect x="367" y="981" width="1" height="1" fill="#6a6a6a"/><rect x="365" y="983" width="1" height="1" fill="#6a6a6a"/><rect x="367" y="985" width="1" height="1" fill="#6a6a6a"/><rect x="365" y="987" width="1" height="1" fill="#6a6a6a"/><rect x="367" y="989" width="1" height="1" fill="#6a6a6a"/><rect x="365" y="991" width="1" height="1" fill="#6a6a6a"/><rect x="367" y="993" width="1" height="1" fill="#6a6a6a"/><rect x="365" y="995" width="1" height="1" fill="#6a6a6a"/><rect x="367" y="997" width="1" height="1" fill="#6a6a6a"/><rect x="365" y="999" width="1" height="1" fill="#6a6a6a"/><rect x="367" y="1001" width="1" height="1" fill="#6a6a6a"/><rect x="365" y="1003" width="1" height="1" fill="#6a6a6a"/><rect x="367" y="1005" width="1" height="1" fill="#6a6a6a"/><rect x="365" y="1007" width="1" height="1" fill="#6a6a6a"/><rect x="367" y="1009" width="1" height="1" fill="#6a6a6a"/><rect x="365" y="1011" width="1" height="1" fill="#6a6a6a"/><rect x="367" y="1013" width="1" height="1" fill="#6a6a6a"/><rect x="365" y="1015" width="1" height="1" fill="#6a6a6a"/><rect x="367" y="1017" width="1" height="1" fill="#6a6a6a"/><rect x="365" y="1019" width="1" height="1" fill="#6a6a6a"/><rect x="367" y="1021" width="1" height="1" fill="#6a6a6a"/><rect x="365" y="1023" width="1" height="1" fill="#6a6a6a"/><rect x="367" y="1025" width="1" height="1" fill="#6a6a6a"/><rect x="365" y="1027" width="1" height="1" fill="#6a6a6a"/><rect x="367" y="1029" width="1" height="1" fill="#6a6a6a"/><rect x="365" y="1031" width="1" height="1" fill="#6a6a6a"/><rect x="367" y="1033" width="1" height="1" fill="#6a6a6a"/><rect x="365" y="1035" width="1" height="1" fill="#6a6a6a"/><rect x="367" y="1037" width="1" height="1" fill="#6a6a6a"/><rect x="365" y="1039" width="1" height="1" fill="#6a6a6a"/><rect x="367" y="1041" width="1" height="1" fill="#6a6a6a"/></svg>
<svg width="10" height="22" style="position:absolute;left:361px;top:26px"><rect x="0" y="0" width="9" height="22" fill="#f4f4f6"/><path d="M6.5 1 l-4 4.5 l4 4.5z" fill="#7c8694"/><path d="M2.5 12 l4 4.5 l-4 4.5z" fill="#7c8694"/></svg>
<div style="position:absolute;left:371px;top:23px;width:1549px;height:26px;background:#eeeeee;border-top:3px solid #f4f6fc;"></div>
<div style="position:absolute;left:1083px;top:45px;width:837px;height:1px;background:#5c6474;"></div>
<div style="position:absolute;left:373px;top:26px;width:56px;height:20px;background:#5c6474;clip-path:polygon(5px 0,100% 0,100% 100%,0 100%,0 5px);"></div>
<div style="position:absolute;left:374px;top:27px;width:54px;height:18px;background:#f8fbff;clip-path:polygon(4.5px 0,100% 0,100% 100%,0 100%,0 4.5px);"></div>
<div style="position:absolute;left:375px;top:28px;width:53px;height:17px;background:linear-gradient(#7ab8e0,#70acd6);clip-path:polygon(4px 0,100% 0,100% 100%,0 100%,0 4px);font-size:12px;font-weight:bold;color:#102c4c;text-align:center;line-height:16px;padding-right:1px;">Track</div>
<div style="position:absolute;left:429px;top:26px;width:66px;height:20px;background:#5c6474;clip-path:polygon(5px 0,100% 0,100% 100%,0 100%,0 5px);"></div>
<div style="position:absolute;left:430px;top:27px;width:64px;height:18px;background:#f8fbff;clip-path:polygon(4.5px 0,100% 0,100% 100%,0 100%,0 4.5px);"></div>
<div style="position:absolute;left:431px;top:28px;width:63px;height:17px;background:linear-gradient(#7ab8e0,#70acd6);clip-path:polygon(4px 0,100% 0,100% 100%,0 100%,0 4px);font-size:12px;font-weight:bold;color:#102c4c;text-align:center;line-height:16px;padding-right:1px;">Sail Plot</div>
<div style="position:absolute;left:495px;top:26px;width:83px;height:20px;background:#5c6474;clip-path:polygon(5px 0,100% 0,100% 100%,0 100%,0 5px);"></div>
<div style="position:absolute;left:496px;top:27px;width:81px;height:18px;background:#f8fbff;clip-path:polygon(4.5px 0,100% 0,100% 100%,0 100%,0 4.5px);"></div>
<div style="position:absolute;left:497px;top:28px;width:80px;height:17px;background:linear-gradient(#7ab8e0,#70acd6);clip-path:polygon(4px 0,100% 0,100% 100%,0 100%,0 4px);font-size:12px;font-weight:bold;color:#102c4c;text-align:center;line-height:16px;padding-right:1px;">Trend Data</div>
<div style="position:absolute;left:578px;top:26px;width:80px;height:20px;background:#5c6474;clip-path:polygon(5px 0,100% 0,100% 100%,0 100%,0 5px);"></div>
<div style="position:absolute;left:579px;top:27px;width:78px;height:18px;background:#f8fbff;clip-path:polygon(4.5px 0,100% 0,100% 100%,0 100%,0 4.5px);"></div>
<div style="position:absolute;left:580px;top:28px;width:77px;height:17px;background:linear-gradient(#6a9acb,#5d8ec0);clip-path:polygon(4px 0,100% 0,100% 100%,0 100%,0 4px);font-size:12px;font-weight:bold;color:#102c4c;text-align:center;line-height:16px;padding-right:1px;">Polar Data</div>
<div style="position:absolute;left:658px;top:26px;width:171px;height:20px;background:#5c6474;clip-path:polygon(5px 0,100% 0,100% 100%,0 100%,0 5px);"></div>
<div style="position:absolute;left:659px;top:27px;width:169px;height:18px;background:#f8fbff;clip-path:polygon(4.5px 0,100% 0,100% 100%,0 100%,0 4.5px);"></div>
<div style="position:absolute;left:660px;top:28px;width:168px;height:17px;background:linear-gradient(#7ab8e0,#70acd6);clip-path:polygon(4px 0,100% 0,100% 100%,0 100%,0 4px);font-size:12px;font-weight:bold;color:#102c4c;text-align:center;line-height:16px;padding-right:1px;">Processed Summary Data</div>
<div style="position:absolute;left:829px;top:26px;width:145px;height:20px;background:#5c6474;clip-path:polygon(5px 0,100% 0,100% 100%,0 100%,0 5px);"></div>
<div style="position:absolute;left:830px;top:27px;width:143px;height:18px;background:#f8fbff;clip-path:polygon(4.5px 0,100% 0,100% 100%,0 100%,0 4.5px);"></div>
<div style="position:absolute;left:831px;top:28px;width:142px;height:17px;background:linear-gradient(#7ab8e0,#70acd6);clip-path:polygon(4px 0,100% 0,100% 100%,0 100%,0 4px);font-size:12px;font-weight:bold;color:#102c4c;text-align:center;line-height:16px;padding-right:1px;">Route and Boat Config</div>
<div style="position:absolute;left:974px;top:26px;width:110px;height:20px;background:#5c6474;clip-path:polygon(5px 0,100% 0,100% 100%,0 100%,0 5px);"></div>
<div style="position:absolute;left:975px;top:27px;width:108px;height:18px;background:#f8fbff;clip-path:polygon(4.5px 0,100% 0,100% 100%,0 100%,0 4.5px);"></div>
<div style="position:absolute;left:976px;top:28px;width:107px;height:17px;background:linear-gradient(#7ab8e0,#70acd6);clip-path:polygon(4px 0,100% 0,100% 100%,0 100%,0 4px);font-size:12px;font-weight:bold;color:#102c4c;text-align:center;line-height:16px;padding-right:1px;">Diagnostic Data</div>
<div style="position:absolute;left:371px;top:46px;width:1528px;height:3px;background:#d4e4f6;border-top:1px solid #f0f6fc;"></div>
<div style="position:absolute;left:372px;top:49px;width:1528px;height:991px;background:#6eaad2;border-left:1px solid #c4d6ea;"></div>
<div style="position:absolute;left:373px;top:50px;width:1526px;height:498px;background:#2f5278;"></div>
<div style="position:absolute;left:1899px;top:49px;width:21px;height:991px;background:#f0eefa;border-left:1px solid #7b8797;"></div>
<div style="position:absolute;left:1900px;top:50px;width:15px;height:15px;background:#f4f4f8;border-bottom:1px solid #8a96a6;"><svg width="15" height="15" style="position:absolute;left:0;top:0"><path d="M3 9 h8 l-4 -4z" fill="#1a1a1a"/></svg></div>
<div style="position:absolute;left:1915px;top:49px;width:5px;height:991px;background:#f0f0f4;border-left:1px solid #9aa;"></div>
<div style="position:absolute;left:1900px;top:1030px;width:15px;height:10px;background:#f4f4f8;border-top:1px solid #8a96a6;"><svg width="15" height="10" style="position:absolute;left:0;top:0"><path d="M3 5 h8 l-4 4z" fill="#1a1a1a"/></svg></div>
<svg width="1526" height="498" viewBox="373 50 1526 498" style="position:absolute;left:373px;top:50px">
<text x="1136.2" y="71" text-anchor="middle" font-family="Liberation Sans" font-weight="bold" font-size="20.5" fill="#c2c6ce" stroke="#c2c6ce" stroke-width="0.7" transform="translate(1136.2 0) scale(1.44 1) translate(-1136.2 0)">Current Session Polar Data</text>
<rect x="462" y="84" width="1420" height="368.5" fill="#c9c9c9"/>
<line x1="462" x2="1882" y1="433.5" y2="433.5" stroke="#d65c5c" stroke-width="1" stroke-dasharray="4 3"/>
<line x1="462" x2="1882" y1="414.5" y2="414.5" stroke="#d65c5c" stroke-width="1" stroke-dasharray="4 3"/>
<line x1="462" x2="1882" y1="395.5" y2="395.5" stroke="#d65c5c" stroke-width="1" stroke-dasharray="4 3"/>
<line x1="462" x2="1882" y1="376.5" y2="376.5" stroke="#d65c5c" stroke-width="1" stroke-dasharray="4 3"/>
<line x1="462" x2="1882" y1="357.5" y2="357.5" stroke="#d65c5c" stroke-width="1" stroke-dasharray="4 3"/>
<line x1="462" x2="1882" y1="338.5" y2="338.5" stroke="#d65c5c" stroke-width="1" stroke-dasharray="4 3"/>
<line x1="462" x2="1882" y1="319.5" y2="319.5" stroke="#d65c5c" stroke-width="1" stroke-dasharray="4 3"/>
<line x1="462" x2="1882" y1="300.5" y2="300.5" stroke="#d65c5c" stroke-width="1" stroke-dasharray="4 3"/>
<line x1="462" x2="1882" y1="280.5" y2="280.5" stroke="#d65c5c" stroke-width="1" stroke-dasharray="4 3"/>
<line x1="462" x2="1882" y1="261.5" y2="261.5" stroke="#d65c5c" stroke-width="1" stroke-dasharray="4 3"/>
<line x1="462" x2="1882" y1="242.5" y2="242.5" stroke="#d65c5c" stroke-width="1" stroke-dasharray="4 3"/>
<line x1="462" x2="1882" y1="223.5" y2="223.5" stroke="#d65c5c" stroke-width="1" stroke-dasharray="4 3"/>
<line x1="462" x2="1882" y1="204.5" y2="204.5" stroke="#d65c5c" stroke-width="1" stroke-dasharray="4 3"/>
<line x1="462" x2="1882" y1="185.5" y2="185.5" stroke="#d65c5c" stroke-width="1" stroke-dasharray="4 3"/>
<line x1="462" x2="1882" y1="166.5" y2="166.5" stroke="#d65c5c" stroke-width="1" stroke-dasharray="4 3"/>
<line x1="462" x2="1882" y1="147.5" y2="147.5" stroke="#d65c5c" stroke-width="1" stroke-dasharray="4 3"/>
<line x1="462" x2="1882" y1="128.5" y2="128.5" stroke="#d65c5c" stroke-width="1" stroke-dasharray="4 3"/>
<line x1="462" x2="1882" y1="109.5" y2="109.5" stroke="#d65c5c" stroke-width="1" stroke-dasharray="4 3"/>
<line x1="462" x2="1882" y1="90.5" y2="90.5" stroke="#d65c5c" stroke-width="1" stroke-dasharray="4 3"/>
<line x1="538.5" x2="538.5" y1="81" y2="452" stroke="#d65c5c" stroke-width="1" stroke-dasharray="3 3"/>
<line x1="613.5" x2="613.5" y1="81" y2="452" stroke="#d65c5c" stroke-width="1" stroke-dasharray="3 3"/>
<line x1="688.5" x2="688.5" y1="81" y2="452" stroke="#d65c5c" stroke-width="1" stroke-dasharray="3 3"/>
<line x1="763.5" x2="763.5" y1="81" y2="452" stroke="#d65c5c" stroke-width="1" stroke-dasharray="3 3"/>
<line x1="838.5" x2="838.5" y1="81" y2="452" stroke="#d65c5c" stroke-width="1" stroke-dasharray="3 3"/>
<line x1="914.5" x2="914.5" y1="81" y2="452" stroke="#d65c5c" stroke-width="1" stroke-dasharray="3 3"/>
<line x1="989.5" x2="989.5" y1="81" y2="452" stroke="#d65c5c" stroke-width="1" stroke-dasharray="3 3"/>
<line x1="1064.5" x2="1064.5" y1="81" y2="452" stroke="#d65c5c" stroke-width="1" stroke-dasharray="3 3"/>
<line x1="1139.5" x2="1139.5" y1="81" y2="452" stroke="#d65c5c" stroke-width="1" stroke-dasharray="3 3"/>
<line x1="1214.5" x2="1214.5" y1="81" y2="452" stroke="#d65c5c" stroke-width="1" stroke-dasharray="3 3"/>
<line x1="1289.5" x2="1289.5" y1="81" y2="452" stroke="#d65c5c" stroke-width="1" stroke-dasharray="3 3"/>
<line x1="1364.5" x2="1364.5" y1="81" y2="452" stroke="#d65c5c" stroke-width="1" stroke-dasharray="3 3"/>
<line x1="1439.5" x2="1439.5" y1="81" y2="452" stroke="#d65c5c" stroke-width="1" stroke-dasharray="3 3"/>
<line x1="1514.5" x2="1514.5" y1="81" y2="452" stroke="#d65c5c" stroke-width="1" stroke-dasharray="3 3"/>
<line x1="1590.5" x2="1590.5" y1="81" y2="452" stroke="#d65c5c" stroke-width="1" stroke-dasharray="3 3"/>
<line x1="1665.5" x2="1665.5" y1="81" y2="452" stroke="#d65c5c" stroke-width="1" stroke-dasharray="3 3"/>
<line x1="1740.5" x2="1740.5" y1="81" y2="452" stroke="#d65c5c" stroke-width="1" stroke-dasharray="3 3"/>
<line x1="1815.5" x2="1815.5" y1="81" y2="452" stroke="#d65c5c" stroke-width="1" stroke-dasharray="3 3"/>
<polyline points="1552.5,101.1 1590.1,109.5" fill="none" stroke="#0000a8" stroke-width="2.6" stroke-linejoin="miter" stroke-linecap="square"/>
<polyline points="1439.8,167.0 1477.4,109.5 1514.9,109.5 1552.5,113.7 1590.1,116.7 1627.6,128.9 1665.2,143.8 1702.7,143.8 1740.3,155.2 1777.8,132.7 1815.4,124.7" fill="none" stroke="#a80000" stroke-width="2.8" stroke-linejoin="miter" stroke-linecap="square"/>
<polyline points="839.0,170.4 876.5,174.2 914.1,208.5 951.6,200.9 989.2,166.6 1139.4,174.2 1252.1,151.4 1289.6,151.4 1364.7,171.6 1402.3,181.9 1439.8,131.9 1477.4,116.3 1514.9,116.3 1552.5,139.9 1590.1,128.5 1627.6,139.2 1665.2,155.6 1702.7,158.6 1740.3,155.6 1777.8,158.6" fill="none" stroke="#7e7e7e" stroke-width="2.6" stroke-linejoin="miter" stroke-linecap="square"/>
<polyline points="613.6,197.1 801.4,208.5 839.0,162.8 876.5,162.8 914.1,159.0 951.6,162.8 989.2,170.4 1026.7,155.2 1064.3,162.8 1139.4,174.2 1176.9,183.8 1214.5,185.3 1252.1,182.6 1289.6,167.0 1327.2,178.1 1364.7,199.0 1439.8,130.0 1477.4,127.0 1514.9,129.3 1552.5,158.2 1590.1,173.1 1627.6,172.3 1665.2,177.7 1702.7,175.0 1740.3,182.6 1777.8,188.7" fill="none" stroke="#efb2b2" stroke-width="3" stroke-linejoin="miter" stroke-linecap="square"/>
<polyline points="501.0,216.2 726.3,185.7 763.8,200.9 801.4,197.1 839.0,189.5 876.5,181.9 914.1,185.7 951.6,170.4 989.2,166.6 1026.7,166.6 1064.3,162.8 1101.8,185.7 1139.4,151.4 1176.9,226.5 1214.5,170.1 1252.1,207.8 1289.6,181.5 1327.2,181.5 1364.7,193.3 1402.3,176.2 1439.8,155.2 1477.4,140.3 1514.9,139.9 1552.5,170.4 1590.1,189.1 1627.6,200.5 1665.2,204.7 1702.7,200.5 1740.3,185.7 1777.8,167.0 1815.4,177.7" fill="none" stroke="#66eeee" stroke-width="3.4" stroke-linejoin="miter" stroke-linecap="square"/>
<polyline points="501.0,208.5 576.1,193.3 651.2,159.0 688.7,246.7 726.3,220.0 763.8,220.0 801.4,204.7 839.0,200.9 876.5,197.1 914.1,197.1 951.6,197.1 989.2,185.7 1026.7,212.4 1064.3,189.5 1101.8,189.5 1139.4,166.6 1252.1,234.8 1289.6,193.3 1327.2,208.5 1364.7,200.2 1402.3,193.7 1439.8,177.7 1477.4,204.7 1514.9,212.7 1552.5,227.6 1590.1,219.6 1627.6,227.6 1665.2,227.6 1702.7,232.2 1740.3,232.2 1777.8,216.9 1815.4,223.4" fill="none" stroke="#e45ee4" stroke-width="3.2" stroke-linejoin="miter" stroke-linecap="square"/>
<polyline points="726.3,284.8 763.8,265.7 801.4,231.4 839.0,220.0 876.5,208.5 914.1,212.4 951.6,208.5 989.2,212.4 1026.7,212.4 1064.3,227.6 1139.4,273.3 1214.5,264.9 1252.1,311.4 1289.6,338.5 1364.7,260.8 1402.3,255.0 1439.8,255.0 1477.4,251.2 1514.9,260.8 1552.5,258.9 1590.1,261.9 1627.6,261.9 1665.2,264.2 1702.7,292.4 1740.3,296.2 1777.8,311.4 1815.4,283.6" fill="none" stroke="#f6f662" stroke-width="3" stroke-linejoin="miter" stroke-linecap="square"/>
<polyline points="538.5,288.6 763.8,288.6 801.4,292.4 839.0,284.8 876.5,284.8 914.1,273.3 951.6,292.4 989.2,231.4 1026.7,277.1 1064.3,300.0 1101.8,300.0 1139.4,444.8 1176.9,325.9 1214.5,325.9 1252.1,333.9 1289.6,330.1 1327.2,349.2 1364.7,330.1 1402.3,353.0 1439.8,341.5 1477.4,295.8 1514.9,321.7 1552.5,300.0 1590.1,321.7 1627.6,338.5 1665.2,342.3 1702.7,338.1 1740.3,334.7 1777.8,349.6 1815.4,357.2" fill="none" stroke="#66ec66" stroke-width="3" stroke-linejoin="miter" stroke-linecap="square"/>
<polyline points="688.7,399.1 801.4,410.5 839.0,361.0 876.5,345.7 1026.7,349.6 1064.3,391.5 1101.8,303.8 1139.4,368.6 1214.5,345.4 1252.1,299.6 1289.6,329.7 1327.2,387.7 1402.3,337.7 1439.8,372.4 1477.4,418.5 1514.9,376.2 1552.5,387.7 1590.1,372.4 1627.6,380.4 1665.2,380.4 1702.7,399.1 1740.3,403.7 1777.8,414.7 1815.4,403.7" fill="none" stroke="#5858e0" stroke-width="3.2" stroke-linejoin="miter" stroke-linecap="square"/>
<polyline points="501.0,433.4 651.2,433.4 688.7,410.5 726.3,422.0 801.4,399.1 839.0,380.0 876.5,368.6 951.6,399.1 1026.7,402.9 1101.8,387.7 1139.4,406.7 1176.9,437.6 1252.1,406.3 1289.6,430.0 1364.7,418.5 1402.3,406.3 1439.8,425.4 1477.4,414.0 1514.9,403.7 1552.5,430.0 1590.1,372.4 1665.2,422.3 1702.7,422.3 1740.3,422.3 1777.8,422.3 1815.4,430.0" fill="none" stroke="#e86262" stroke-width="3" stroke-linejoin="miter" stroke-linecap="square"/>
<line x1="456.5" x2="456.5" y1="84" y2="452.5" stroke="#c8d4e2" stroke-width="1.2"/>
<line x1="462" x2="1882" y1="456.6" y2="456.6" stroke="#c8d4e2" stroke-width="1.2"/>
<line x1="452.5" x2="456" y1="452.4" y2="452.4" stroke="#c8d4e2" stroke-width="1"/>
<text x="447" y="457.1" text-anchor="end" font-family="Liberation Sans" font-size="12.6" fill="#bcc8d8" transform="translate(447 0) scale(1.40 1) translate(-447 0)">0.0</text>
<line x1="452.5" x2="456" y1="433.4" y2="433.4" stroke="#c8d4e2" stroke-width="1"/>
<text x="447" y="438.0" text-anchor="end" font-family="Liberation Sans" font-size="12.6" fill="#bcc8d8" transform="translate(447 0) scale(1.40 1) translate(-447 0)">0.5</text>
<line x1="452.5" x2="456" y1="414.3" y2="414.3" stroke="#c8d4e2" stroke-width="1"/>
<text x="447" y="418.9" text-anchor="end" font-family="Liberation Sans" font-size="12.6" fill="#bcc8d8" transform="translate(447 0) scale(1.40 1) translate(-447 0)">1.0</text>
<line x1="452.5" x2="456" y1="395.3" y2="395.3" stroke="#c8d4e2" stroke-width="1"/>
<text x="447" y="399.9" text-anchor="end" font-family="Liberation Sans" font-size="12.6" fill="#bcc8d8" transform="translate(447 0) scale(1.40 1) translate(-447 0)">1.5</text>
<line x1="452.5" x2="456" y1="376.2" y2="376.2" stroke="#c8d4e2" stroke-width="1"/>
<text x="447" y="380.8" text-anchor="end" font-family="Liberation Sans" font-size="12.6" fill="#bcc8d8" transform="translate(447 0) scale(1.40 1) translate(-447 0)">2.0</text>
<line x1="452.5" x2="456" y1="357.2" y2="357.2" stroke="#c8d4e2" stroke-width="1"/>
<text x="447" y="361.8" text-anchor="end" font-family="Liberation Sans" font-size="12.6" fill="#bcc8d8" transform="translate(447 0) scale(1.40 1) translate(-447 0)">2.5</text>
<line x1="452.5" x2="456" y1="338.1" y2="338.1" stroke="#c8d4e2" stroke-width="1"/>
<text x="447" y="342.7" text-anchor="end" font-family="Liberation Sans" font-size="12.6" fill="#bcc8d8" transform="translate(447 0) scale(1.40 1) translate(-447 0)">3.0</text>
<line x1="452.5" x2="456" y1="319.1" y2="319.1" stroke="#c8d4e2" stroke-width="1"/>
<text x="447" y="323.7" text-anchor="end" font-family="Liberation Sans" font-size="12.6" fill="#bcc8d8" transform="translate(447 0) scale(1.40 1) translate(-447 0)">3.5</text>
<line x1="452.5" x2="456" y1="300.0" y2="300.0" stroke="#c8d4e2" stroke-width="1"/>
<text x="447" y="304.6" text-anchor="end" font-family="Liberation Sans" font-size="12.6" fill="#bcc8d8" transform="translate(447 0) scale(1.40 1) translate(-447 0)">4.0</text>
<line x1="452.5" x2="456" y1="281.0" y2="281.0" stroke="#c8d4e2" stroke-width="1"/>
<text x="447" y="285.6" text-anchor="end" font-family="Liberation Sans" font-size="12.6" fill="#bcc8d8" transform="translate(447 0) scale(1.40 1) translate(-447 0)">4.5</text>
<line x1="452.5" x2="456" y1="261.9" y2="261.9" stroke="#c8d4e2" stroke-width="1"/>
<text x="447" y="266.5" text-anchor="end" font-family="Liberation Sans" font-size="12.6" fill="#bcc8d8" transform="translate(447 0) scale(1.40 1) translate(-447 0)">5.0</text>
<line x1="452.5" x2="456" y1="242.8" y2="242.8" stroke="#c8d4e2" stroke-width="1"/>
<text x="447" y="247.4" text-anchor="end" font-family="Liberation Sans" font-size="12.6" fill="#bcc8d8" transform="translate(447 0) scale(1.40 1) translate(-447 0)">5.5</text>
<line x1="452.5" x2="456" y1="223.8" y2="223.8" stroke="#c8d4e2" stroke-width="1"/>
<text x="447" y="228.4" text-anchor="end" font-family="Liberation Sans" font-size="12.6" fill="#bcc8d8" transform="translate(447 0) scale(1.40 1) translate(-447 0)">6.0</text>
<line x1="452.5" x2="456" y1="204.7" y2="204.7" stroke="#c8d4e2" stroke-width="1"/>
<text x="447" y="209.3" text-anchor="end" font-family="Liberation Sans" font-size="12.6" fill="#bcc8d8" transform="translate(447 0) scale(1.40 1) translate(-447 0)">6.5</text>
<line x1="452.5" x2="456" y1="185.7" y2="185.7" stroke="#c8d4e2" stroke-width="1"/>
<text x="447" y="190.3" text-anchor="end" font-family="Liberation Sans" font-size="12.6" fill="#bcc8d8" transform="translate(447 0) scale(1.40 1) translate(-447 0)">7.0</text>
<line x1="452.5" x2="456" y1="166.6" y2="166.6" stroke="#c8d4e2" stroke-width="1"/>
<text x="447" y="171.2" text-anchor="end" font-family="Liberation Sans" font-size="12.6" fill="#bcc8d8" transform="translate(447 0) scale(1.40 1) translate(-447 0)">7.5</text>
<line x1="452.5" x2="456" y1="147.6" y2="147.6" stroke="#c8d4e2" stroke-width="1"/>
<text x="447" y="152.2" text-anchor="end" font-family="Liberation Sans" font-size="12.6" fill="#bcc8d8" transform="translate(447 0) scale(1.40 1) translate(-447 0)">8.0</text>
<line x1="452.5" x2="456" y1="128.5" y2="128.5" stroke="#c8d4e2" stroke-width="1"/>
<text x="447" y="133.1" text-anchor="end" font-family="Liberation Sans" font-size="12.6" fill="#bcc8d8" transform="translate(447 0) scale(1.40 1) translate(-447 0)">8.5</text>
<line x1="452.5" x2="456" y1="109.5" y2="109.5" stroke="#c8d4e2" stroke-width="1"/>
<text x="447" y="114.1" text-anchor="end" font-family="Liberation Sans" font-size="12.6" fill="#bcc8d8" transform="translate(447 0) scale(1.40 1) translate(-447 0)">9.0</text>
<line x1="452.5" x2="456" y1="90.4" y2="90.4" stroke="#c8d4e2" stroke-width="1"/>
<text x="447" y="95.0" text-anchor="end" font-family="Liberation Sans" font-size="12.6" fill="#bcc8d8" transform="translate(447 0) scale(1.40 1) translate(-447 0)">9.5</text>
<line x1="463.4" x2="463.4" y1="457" y2="460" stroke="#c8d4e2" stroke-width="1"/>
<text x="463.4" y="473" text-anchor="middle" font-family="Liberation Sans" font-size="12.6" fill="#bcc8d8" transform="translate(463.4 0) scale(1.37 1) translate(-463.4 0)">0</text>
<line x1="538.5" x2="538.5" y1="457" y2="460" stroke="#c8d4e2" stroke-width="1"/>
<text x="538.5" y="473" text-anchor="middle" font-family="Liberation Sans" font-size="12.6" fill="#bcc8d8" transform="translate(538.5 0) scale(1.37 1) translate(-538.5 0)">10</text>
<line x1="613.6" x2="613.6" y1="457" y2="460" stroke="#c8d4e2" stroke-width="1"/>
<text x="613.6" y="473" text-anchor="middle" font-family="Liberation Sans" font-size="12.6" fill="#bcc8d8" transform="translate(613.6 0) scale(1.37 1) translate(-613.6 0)">20</text>
<line x1="688.7" x2="688.7" y1="457" y2="460" stroke="#c8d4e2" stroke-width="1"/>
<text x="688.7" y="473" text-anchor="middle" font-family="Liberation Sans" font-size="12.6" fill="#bcc8d8" transform="translate(688.7 0) scale(1.37 1) translate(-688.7 0)">30</text>
<line x1="763.8" x2="763.8" y1="457" y2="460" stroke="#c8d4e2" stroke-width="1"/>
<text x="763.8" y="473" text-anchor="middle" font-family="Liberation Sans" font-size="12.6" fill="#bcc8d8" transform="translate(763.8 0) scale(1.37 1) translate(-763.8 0)">40</text>
<line x1="839.0" x2="839.0" y1="457" y2="460" stroke="#c8d4e2" stroke-width="1"/>
<text x="839.0" y="473" text-anchor="middle" font-family="Liberation Sans" font-size="12.6" fill="#bcc8d8" transform="translate(839.0 0) scale(1.37 1) translate(-839.0 0)">50</text>
<line x1="914.1" x2="914.1" y1="457" y2="460" stroke="#c8d4e2" stroke-width="1"/>
<text x="914.1" y="473" text-anchor="middle" font-family="Liberation Sans" font-size="12.6" fill="#bcc8d8" transform="translate(914.1 0) scale(1.37 1) translate(-914.1 0)">60</text>
<line x1="989.2" x2="989.2" y1="457" y2="460" stroke="#c8d4e2" stroke-width="1"/>
<text x="989.2" y="473" text-anchor="middle" font-family="Liberation Sans" font-size="12.6" fill="#bcc8d8" transform="translate(989.2 0) scale(1.37 1) translate(-989.2 0)">70</text>
<line x1="1064.3" x2="1064.3" y1="457" y2="460" stroke="#c8d4e2" stroke-width="1"/>
<text x="1064.3" y="473" text-anchor="middle" font-family="Liberation Sans" font-size="12.6" fill="#bcc8d8" transform="translate(1064.3 0) scale(1.37 1) translate(-1064.3 0)">80</text>
<line x1="1139.4" x2="1139.4" y1="457" y2="460" stroke="#c8d4e2" stroke-width="1"/>
<text x="1139.4" y="473" text-anchor="middle" font-family="Liberation Sans" font-size="12.6" fill="#bcc8d8" transform="translate(1139.4 0) scale(1.37 1) translate(-1139.4 0)">90</text>
<line x1="1214.5" x2="1214.5" y1="457" y2="460" stroke="#c8d4e2" stroke-width="1"/>
<text x="1214.5" y="473" text-anchor="middle" font-family="Liberation Sans" font-size="12.6" fill="#bcc8d8" transform="translate(1214.5 0) scale(1.37 1) translate(-1214.5 0)">100</text>
<line x1="1289.6" x2="1289.6" y1="457" y2="460" stroke="#c8d4e2" stroke-width="1"/>
<text x="1289.6" y="473" text-anchor="middle" font-family="Liberation Sans" font-size="12.6" fill="#bcc8d8" transform="translate(1289.6 0) scale(1.37 1) translate(-1289.6 0)">110</text>
<line x1="1364.7" x2="1364.7" y1="457" y2="460" stroke="#c8d4e2" stroke-width="1"/>
<text x="1364.7" y="473" text-anchor="middle" font-family="Liberation Sans" font-size="12.6" fill="#bcc8d8" transform="translate(1364.7 0) scale(1.37 1) translate(-1364.7 0)">120</text>
<line x1="1439.8" x2="1439.8" y1="457" y2="460" stroke="#c8d4e2" stroke-width="1"/>
<text x="1439.8" y="473" text-anchor="middle" font-family="Liberation Sans" font-size="12.6" fill="#bcc8d8" transform="translate(1439.8 0) scale(1.37 1) translate(-1439.8 0)">130</text>
<line x1="1514.9" x2="1514.9" y1="457" y2="460" stroke="#c8d4e2" stroke-width="1"/>
<text x="1514.9" y="473" text-anchor="middle" font-family="Liberation Sans" font-size="12.6" fill="#bcc8d8" transform="translate(1514.9 0) scale(1.37 1) translate(-1514.9 0)">140</text>
<line x1="1590.1" x2="1590.1" y1="457" y2="460" stroke="#c8d4e2" stroke-width="1"/>
<text x="1590.1" y="473" text-anchor="middle" font-family="Liberation Sans" font-size="12.6" fill="#bcc8d8" transform="translate(1590.1 0) scale(1.37 1) translate(-1590.1 0)">150</text>
<line x1="1665.2" x2="1665.2" y1="457" y2="460" stroke="#c8d4e2" stroke-width="1"/>
<text x="1665.2" y="473" text-anchor="middle" font-family="Liberation Sans" font-size="12.6" fill="#bcc8d8" transform="translate(1665.2 0) scale(1.37 1) translate(-1665.2 0)">160</text>
<line x1="1740.3" x2="1740.3" y1="457" y2="460" stroke="#c8d4e2" stroke-width="1"/>
<text x="1740.3" y="473" text-anchor="middle" font-family="Liberation Sans" font-size="12.6" fill="#bcc8d8" transform="translate(1740.3 0) scale(1.37 1) translate(-1740.3 0)">170</text>
<line x1="1815.4" x2="1815.4" y1="457" y2="460" stroke="#c8d4e2" stroke-width="1"/>
<text x="1815.4" y="473" text-anchor="middle" font-family="Liberation Sans" font-size="12.6" fill="#bcc8d8" transform="translate(1815.4 0) scale(1.37 1) translate(-1815.4 0)">180</text>
<text x="1172" y="492" text-anchor="middle" font-family="Liberation Sans" font-weight="bold" font-size="14" fill="#c6cad2" transform="translate(1172 0) scale(1.48 1) translate(-1172 0)">TWA (Degs)</text>
<text x="0" y="0" text-anchor="middle" font-family="Liberation Sans" font-weight="bold" font-size="21.5" fill="#c6cad2" stroke="#c6cad2" stroke-width="0.4" transform="translate(410.5 263.5) rotate(-90) scale(0.76 1)">STW (Kts)</text>
<rect x="376" y="504" width="1521" height="41.5" fill="#2f5278" stroke="#0e1624" stroke-width="2"/>
<line x1="380" x2="404" y1="515.0" y2="515.0" stroke="#e86262" stroke-width="2.4"/>
<text x="407.6" y="519.5" font-family="Liberation Sans" font-size="13" fill="#bcc6d4" transform="translate(407.6 0) scale(1.33 1) translate(-407.6 0)">2 Knots</text>
<line x1="475.03970000000004" x2="499.03970000000004" y1="515.0" y2="515.0" stroke="#5858e0" stroke-width="2.4"/>
<text x="502.63970000000006" y="519.5" font-family="Liberation Sans" font-size="13" fill="#bcc6d4" transform="translate(502.63970000000006 0) scale(1.33 1) translate(-502.63970000000006 0)">4 Knots</text>
<line x1="570.0794000000001" x2="594.0794000000001" y1="515.0" y2="515.0" stroke="#66ec66" stroke-width="2.4"/>
<text x="597.6794000000001" y="519.5" font-family="Liberation Sans" font-size="13" fill="#bcc6d4" transform="translate(597.6794000000001 0) scale(1.33 1) translate(-597.6794000000001 0)">6 Knots</text>
<line x1="665.1191000000001" x2="689.1191000000001" y1="515.0" y2="515.0" stroke="#f6f662" stroke-width="2.4"/>
<text x="692.7191000000001" y="519.5" font-family="Liberation Sans" font-size="13" fill="#bcc6d4" transform="translate(692.7191000000001 0) scale(1.33 1) translate(-692.7191000000001 0)">8 Knots</text>
<line x1="760.1588000000002" x2="784.1588000000002" y1="515.0" y2="515.0" stroke="#e45ee4" stroke-width="2.4"/>
<text x="787.7588000000002" y="519.5" font-family="Liberation Sans" font-size="13" fill="#bcc6d4" transform="translate(787.7588000000002 0) scale(1.33 1) translate(-787.7588000000002 0)">10 Knots</text>
<line x1="864.7878000000002" x2="888.7878000000002" y1="515.0" y2="515.0" stroke="#66eeee" stroke-width="2.4"/>
<text x="892.3878000000002" y="519.5" font-family="Liberation Sans" font-size="13" fill="#bcc6d4" transform="translate(892.3878000000002 0) scale(1.33 1) translate(-892.3878000000002 0)">12 Knots</text>
<line x1="969.4168000000002" x2="993.4168000000002" y1="515.0" y2="515.0" stroke="#efb2b2" stroke-width="2.4"/>
<text x="997.0168000000002" y="519.5" font-family="Liberation Sans" font-size="13" fill="#bcc6d4" transform="translate(997.0168000000002 0) scale(1.33 1) translate(-997.0168000000002 0)">14 Knots</text>
<line x1="1074.0458" x2="1098.0458" y1="515.0" y2="515.0" stroke="#7e7e7e" stroke-width="2.4"/>
<text x="1101.6458" y="519.5" font-family="Liberation Sans" font-size="13" fill="#bcc6d4" transform="translate(1101.6458 0) scale(1.33 1) translate(-1101.6458 0)">16 Knots</text>
<line x1="1178.6748" x2="1202.6748" y1="515.0" y2="515.0" stroke="#a80000" stroke-width="2.4"/>
<text x="1206.2748" y="519.5" font-family="Liberation Sans" font-size="13" fill="#bcc6d4" transform="translate(1206.2748 0) scale(1.33 1) translate(-1206.2748 0)">18 Knots</text>
<line x1="1283.3038" x2="1307.3038" y1="515.0" y2="515.0" stroke="#0000a8" stroke-width="2.4"/>
<text x="1310.9037999999998" y="519.5" font-family="Liberation Sans" font-size="13" fill="#bcc6d4" transform="translate(1310.9037999999998 0) scale(1.33 1) translate(-1310.9037999999998 0)">20 Knots</text>
<line x1="1387.9327999999998" x2="1411.9327999999998" y1="515.0" y2="515.0" stroke="#22a022" stroke-width="2.4"/>
<text x="1415.5327999999997" y="519.5" font-family="Liberation Sans" font-size="13" fill="#bcc6d4" transform="translate(1415.5327999999997 0) scale(1.33 1) translate(-1415.5327999999997 0)">22 Knots</text>
<line x1="1492.5617999999997" x2="1516.5617999999997" y1="515.0" y2="515.0" stroke="#c4c422" stroke-width="2.4"/>
<text x="1520.1617999999996" y="519.5" font-family="Liberation Sans" font-size="13" fill="#bcc6d4" transform="translate(1520.1617999999996 0) scale(1.33 1) translate(-1520.1617999999996 0)">24 Knots</text>
<line x1="1597.1907999999996" x2="1621.1907999999996" y1="515.0" y2="515.0" stroke="#a020c4" stroke-width="2.4"/>
<text x="1624.7907999999995" y="519.5" font-family="Liberation Sans" font-size="13" fill="#bcc6d4" transform="translate(1624.7907999999995 0) scale(1.33 1) translate(-1624.7907999999995 0)">26 Knots</text>
<line x1="1701.8197999999995" x2="1725.8197999999995" y1="515.0" y2="515.0" stroke="#22b4c4" stroke-width="2.4"/>
<text x="1729.4197999999994" y="519.5" font-family="Liberation Sans" font-size="13" fill="#bcc6d4" transform="translate(1729.4197999999994 0) scale(1.33 1) translate(-1729.4197999999994 0)">28 Knots</text>
<line x1="380" x2="404" y1="536.0" y2="536.0" stroke="#3a4656" stroke-width="2.4"/>
<text x="407.6" y="540.5" font-family="Liberation Sans" font-size="13" fill="#bcc6d4" transform="translate(407.6 0) scale(1.33 1) translate(-407.6 0)">30 Knots</text>
<line x1="484.629" x2="508.629" y1="536.0" y2="536.0" stroke="#e05050" stroke-width="2.4"/>
<text x="512.229" y="540.5" font-family="Liberation Sans" font-size="13" fill="#bcc6d4" transform="translate(512.229 0) scale(1.33 1) translate(-512.229 0)">32 Knots</text>
<line x1="589.258" x2="613.258" y1="536.0" y2="536.0" stroke="#4444dd" stroke-width="2.4"/>
<text x="616.8580000000001" y="540.5" font-family="Liberation Sans" font-size="13" fill="#bcc6d4" transform="translate(616.8580000000001 0) scale(1.33 1) translate(-616.8580000000001 0)">34 Knots</text>
<line x1="693.8870000000001" x2="717.8870000000001" y1="536.0" y2="536.0" stroke="#44dd44" stroke-width="2.4"/>
<text x="721.4870000000001" y="540.5" font-family="Liberation Sans" font-size="13" fill="#bcc6d4" transform="translate(721.4870000000001 0) scale(1.33 1) translate(-721.4870000000001 0)">36 Knots</text>
<line x1="798.5160000000001" x2="822.5160000000001" y1="536.0" y2="536.0" stroke="#eeee44" stroke-width="2.4"/>
<text x="826.1160000000001" y="540.5" font-family="Liberation Sans" font-size="13" fill="#bcc6d4" transform="translate(826.1160000000001 0) scale(1.33 1) translate(-826.1160000000001 0)">38 Knots</text>
<line x1="903.1450000000001" x2="927.1450000000001" y1="536.0" y2="536.0" stroke="#dd44dd" stroke-width="2.4"/>
<text x="930.7450000000001" y="540.5" font-family="Liberation Sans" font-size="13" fill="#bcc6d4" transform="translate(930.7450000000001 0) scale(1.33 1) translate(-930.7450000000001 0)">40 Knots</text>
</svg>
<div style="position:absolute;left:1097px;top:546px;font-size:14.15px;font-style:italic;color:#3a6896;white-space:nowrap;line-height:18px;">Current Session (X Axis; TWA Degs, Y Axis; TWS Kts, Cells; STW Kts)</div>
<div style="position:absolute;left:376px;top:564px;width:104px;height:25px;background:#ff33ff;border:1px solid #a8d0f0;"></div>
<div style="position:absolute;left:486px;top:567px;font-size:14px;font-style:italic;color:#3a6896;white-space:nowrap;line-height:18px;">100% of Boat ...</div>
<div style="position:absolute;left:594px;top:564px;width:104px;height:25px;background:#66cc00;border:1px solid #a8d0f0;"></div>
<div style="position:absolute;left:704px;top:567px;font-size:14px;font-style:italic;color:#3a6896;white-space:nowrap;line-height:18px;">90-&gt;99%</div>
<div style="position:absolute;left:812px;top:564px;width:104px;height:25px;background:#ff9900;border:1px solid #a8d0f0;"></div>
<div style="position:absolute;left:922px;top:567px;font-size:14px;font-style:italic;color:#3a6896;white-space:nowrap;line-height:18px;">80-&gt;89%</div>
<div style="position:absolute;left:1030px;top:564px;width:104px;height:25px;background:#ff0000;border:1px solid #a8d0f0;"></div>
<div style="position:absolute;left:1140px;top:567px;font-size:14px;font-style:italic;color:#3a6896;white-space:nowrap;line-height:18px;">70-&gt;79%</div>
<div style="position:absolute;left:1248px;top:564px;width:104px;height:25px;background:#3366cc;border:1px solid #a8d0f0;"></div>
<div style="position:absolute;left:1358px;top:567px;font-size:14px;font-style:italic;color:#3a6896;white-space:nowrap;line-height:18px;">0-&gt;69%</div>
<div style="position:absolute;left:1467px;top:564px;width:104px;height:25px;background:#2f5278;border:1px solid #a8d0f0;"></div>
<div style="position:absolute;left:1577px;top:567px;font-size:14px;font-style:italic;color:#3a6896;white-space:nowrap;line-height:18px;">No Data</div>
<div style="position:absolute;left:1685px;top:565px;width:103px;height:23px;background:#3e5d99;border:1px solid #2b4a84;border-top-color:#5a7ab0;font-size:14.4px;font-weight:bold;color:#f2d46e;text-align:center;line-height:21px;">Export Data</div>
<div style="position:absolute;left:1793px;top:565px;width:103px;height:23px;background:#3e5d99;border:1px solid #2b4a84;border-top-color:#5a7ab0;font-size:14.4px;font-weight:bold;color:#f2d46e;text-align:center;line-height:21px;">Export +Max</div>
<div style="position:absolute;left:376px;top:590px;width:1507px;height:438px;background:#c9c9c9;"></div>
<div style="position:absolute;left:445px;top:590px;width:80px;height:21px;background:#2f5278;border-left:1px solid #e8f0f8;border-top:1px solid #d4e6f6;font-size:14.4px;color:#98bce2;text-align:center;line-height:19px;">5</div>
<div style="position:absolute;left:525px;top:590px;width:80px;height:21px;background:#2f5278;border-left:1px solid #e8f0f8;border-top:1px solid #d4e6f6;font-size:14.4px;color:#98bce2;text-align:center;line-height:19px;">10</div>
<div style="position:absolute;left:605px;top:590px;width:80px;height:21px;background:#2f5278;border-left:1px solid #e8f0f8;border-top:1px solid #d4e6f6;font-size:14.4px;color:#98bce2;text-align:center;line-height:19px;">15</div>
<div style="position:absolute;left:685px;top:590px;width:80px;height:21px;background:#2f5278;border-left:1px solid #e8f0f8;border-top:1px solid #d4e6f6;font-size:14.4px;color:#98bce2;text-align:center;line-height:19px;">20</div>
<div style="position:absolute;left:765px;top:590px;width:80px;height:21px;background:#2f5278;border-left:1px solid #e8f0f8;border-top:1px solid #d4e6f6;font-size:14.4px;color:#98bce2;text-align:center;line-height:19px;">25</div>
<div style="position:absolute;left:845px;top:590px;width:80px;height:21px;background:#2f5278;border-left:1px solid #e8f0f8;border-top:1px solid #d4e6f6;font-size:14.4px;color:#98bce2;text-align:center;line-height:19px;">30</div>
<div style="position:absolute;left:925px;top:590px;width:80px;height:21px;background:#2f5278;border-left:1px solid #e8f0f8;border-top:1px solid #d4e6f6;font-size:14.4px;color:#98bce2;text-align:center;line-height:19px;">35</div>
<div style="position:absolute;left:1005px;top:590px;width:80px;height:21px;background:#2f5278;border-left:1px solid #e8f0f8;border-top:1px solid #d4e6f6;font-size:14.4px;color:#98bce2;text-align:center;line-height:19px;">40</div>
<div style="position:absolute;left:1085px;top:590px;width:80px;height:21px;background:#2f5278;border-left:1px solid #e8f0f8;border-top:1px solid #d4e6f6;font-size:14.4px;color:#98bce2;text-align:center;line-height:19px;">45</div>
<div style="position:absolute;left:1165px;top:590px;width:80px;height:21px;background:#2f5278;border-left:1px solid #e8f0f8;border-top:1px solid #d4e6f6;font-size:14.4px;color:#98bce2;text-align:center;line-height:19px;">50</div>
<div style="position:absolute;left:1245px;top:590px;width:80px;height:21px;background:#2f5278;border-left:1px solid #e8f0f8;border-top:1px solid #d4e6f6;font-size:14.4px;color:#98bce2;text-align:center;line-height:19px;">55</div>
<div style="position:absolute;left:1325px;top:590px;width:80px;height:21px;background:#2f5278;border-left:1px solid #e8f0f8;border-top:1px solid #d4e6f6;font-size:14.4px;color:#98bce2;text-align:center;line-height:19px;">60</div>
<div style="position:absolute;left:1405px;top:590px;width:80px;height:21px;background:#2f5278;border-left:1px solid #e8f0f8;border-top:1px solid #d4e6f6;font-size:14.4px;color:#98bce2;text-align:center;line-height:19px;">65</div>
<div style="position:absolute;left:1485px;top:590px;width:80px;height:21px;background:#2f5278;border-left:1px solid #e8f0f8;border-top:1px solid #d4e6f6;font-size:14.4px;color:#98bce2;text-align:center;line-height:19px;">70</div>
<div style="position:absolute;left:1565px;top:590px;width:80px;height:21px;background:#2f5278;border-left:1px solid #e8f0f8;border-top:1px solid #d4e6f6;font-size:14.4px;color:#98bce2;text-align:center;line-height:19px;">75</div>
<div style="position:absolute;left:1645px;top:590px;width:80px;height:21px;background:#2f5278;border-left:1px solid #e8f0f8;border-top:1px solid #d4e6f6;font-size:14.4px;color:#98bce2;text-align:center;line-height:19px;">80</div>
<div style="position:absolute;left:1725px;top:590px;width:80px;height:21px;background:#2f5278;border-left:1px solid #e8f0f8;border-top:1px solid #d4e6f6;font-size:14.4px;color:#98bce2;text-align:center;line-height:19px;">85</div>
<div style="position:absolute;left:1805px;top:590px;width:80px;height:21px;background:#2f5278;border-left:1px solid #e8f0f8;border-top:1px solid #d4e6f6;font-size:14.4px;color:#98bce2;text-align:center;line-height:19px;">90</div>
<div style="position:absolute;left:375px;top:612px;width:70px;height:22px;background:#2f5278;border-top:1px solid #f0f6fc;border-left:1px solid #f0f6fc;border-right:1px solid #c9c9c9;font-size:14.2px;font-style:italic;color:#8ab4dc;line-height:20px;padding-left:2px;white-space:nowrap;">2 Knots</div>
<div style="position:absolute;left:446px;top:612px;font-size:14.4px;color:#5a6cb8;line-height:20px;white-space:nowrap;">0.5 (2.5)</div>
<div style="position:absolute;left:526px;top:612px;font-size:14.4px;color:#454e5a;line-height:20px;white-space:nowrap;">0 (2.2)</div>
<div style="position:absolute;left:606px;top:612px;font-size:14.4px;color:#454e5a;line-height:20px;white-space:nowrap;">0 (2.7)</div>
<div style="position:absolute;left:686px;top:612px;font-size:14.4px;color:#454e5a;line-height:20px;white-space:nowrap;">0 (2.9)</div>
<div style="position:absolute;left:766px;top:612px;font-size:14.4px;color:#5a6cb8;line-height:20px;white-space:nowrap;">0.5 (3.2)</div>
<div style="position:absolute;left:846px;top:612px;font-size:14.4px;color:#5a6cb8;line-height:20px;white-space:nowrap;">1.1 (6.3)</div>
<div style="position:absolute;left:926px;top:612px;font-size:14.4px;color:#5a6cb8;line-height:20px;white-space:nowrap;">0.8 (2.4)</div>
<div style="position:absolute;left:1006px;top:612px;font-size:14.4px;color:#454e5a;line-height:20px;white-space:nowrap;">0 (6.4)</div>
<div style="position:absolute;left:1086px;top:612px;font-size:14.4px;color:#5a6cb8;line-height:20px;white-space:nowrap;">1.4 (2.4)</div>
<div style="position:absolute;left:1166px;top:612px;font-size:14.4px;color:#5a6cb8;line-height:20px;white-space:nowrap;">1.9 (5)</div>
<div style="position:absolute;left:1246px;top:612px;font-size:14.4px;color:#e040e0;line-height:20px;white-space:nowrap;">2.2 (2.2)</div>
<div style="position:absolute;left:1326px;top:612px;font-size:14.4px;color:#454e5a;line-height:20px;white-space:nowrap;">0 (4.5)</div>
<div style="position:absolute;left:1406px;top:612px;font-size:14.4px;color:#5a6cb8;line-height:20px;white-space:nowrap;">1.4 (6.3)</div>
<div style="position:absolute;left:1486px;top:612px;font-size:14.4px;color:#454e5a;line-height:20px;white-space:nowrap;">0 (4.2)</div>
<div style="position:absolute;left:1566px;top:612px;font-size:14.4px;color:#e01c1c;line-height:20px;white-space:nowrap;">1.3 (1.8)</div>
<div style="position:absolute;left:1646px;top:612px;font-size:14.4px;color:#454e5a;line-height:20px;white-space:nowrap;">0 (3.3)</div>
<div style="position:absolute;left:1726px;top:612px;font-size:14.4px;color:#e01c1c;line-height:20px;white-space:nowrap;">1.7 (2.3)</div>
<div style="position:absolute;left:1806px;top:612px;font-size:14.4px;color:#5a6cb8;line-height:20px;white-space:nowrap;">1.2 (3.2)</div>
<div style="position:absolute;left:375px;top:636px;width:70px;height:22px;background:#2f5278;border-top:1px solid #f0f6fc;border-left:1px solid #f0f6fc;border-right:1px solid #c9c9c9;font-size:14.2px;font-style:italic;color:#8ab4dc;line-height:20px;padding-left:2px;white-space:nowrap;">4 Knots</div>
<div style="position:absolute;left:446px;top:636px;font-size:14.4px;color:#454e5a;line-height:20px;white-space:nowrap;">0 (3.7)</div>
<div style="position:absolute;left:526px;top:636px;font-size:14.4px;color:#454e5a;line-height:20px;white-space:nowrap;">0 (4.8)</div>
<div style="position:absolute;left:606px;top:636px;font-size:14.4px;color:#454e5a;line-height:20px;white-space:nowrap;">0 (2.2)</div>
<div style="position:absolute;left:686px;top:636px;font-size:14.4px;color:#454e5a;line-height:20px;white-space:nowrap;">0 (3.2)</div>
<div style="position:absolute;left:766px;top:636px;font-size:14.4px;color:#454e5a;line-height:20px;white-space:nowrap;">0 (3.4)</div>
<div style="position:absolute;left:846px;top:636px;font-size:14.4px;color:#5a6cb8;line-height:20px;white-space:nowrap;">1.4 (6.3)</div>
<div style="position:absolute;left:926px;top:636px;font-size:14.4px;color:#454e5a;line-height:20px;white-space:nowrap;">0 (5.9)</div>
<div style="position:absolute;left:1006px;top:636px;font-size:14.4px;color:#454e5a;line-height:20px;white-space:nowrap;">0 (5.3)</div>
<div style="position:absolute;left:1086px;top:636px;font-size:14.4px;color:#5a6cb8;line-height:20px;white-space:nowrap;">1.1 (5.6)</div>
<div style="position:absolute;left:1166px;top:636px;font-size:14.4px;color:#5a6cb8;line-height:20px;white-space:nowrap;">2.4 (6.1)</div>
<div style="position:absolute;left:1246px;top:636px;font-size:14.4px;color:#5a6cb8;line-height:20px;white-space:nowrap;">2.8 (6.5)</div>
<div style="position:absolute;left:1326px;top:636px;font-size:14.4px;color:#454e5a;line-height:20px;white-space:nowrap;">0 (3.4)</div>
<div style="position:absolute;left:1406px;top:636px;font-size:14.4px;color:#454e5a;line-height:20px;white-space:nowrap;">0 (3.1)</div>
<div style="position:absolute;left:1486px;top:636px;font-size:14.4px;color:#454e5a;line-height:20px;white-space:nowrap;">0 (3.5)</div>
<div style="position:absolute;left:1566px;top:636px;font-size:14.4px;color:#5a6cb8;line-height:20px;white-space:nowrap;">2.7 (4.2)</div>
<div style="position:absolute;left:1646px;top:636px;font-size:14.4px;color:#5a6cb8;line-height:20px;white-space:nowrap;">1.6 (3.6)</div>
<div style="position:absolute;left:1726px;top:636px;font-size:14.4px;color:#5a6cb8;line-height:20px;white-space:nowrap;">3.9 (5.6)</div>
<div style="position:absolute;left:1806px;top:636px;font-size:14.4px;color:#5a6cb8;line-height:20px;white-space:nowrap;">2.2 (4.7)</div>
<div style="position:absolute;left:375px;top:660px;width:70px;height:22px;background:#2f5278;border-top:1px solid #f0f6fc;border-left:1px solid #f0f6fc;border-right:1px solid #c9c9c9;font-size:14.2px;font-style:italic;color:#8ab4dc;line-height:20px;padding-left:2px;white-space:nowrap;">6 Knots</div>
<div style="position:absolute;left:446px;top:660px;font-size:14.4px;color:#454e5a;line-height:20px;white-space:nowrap;">0 (4.4)</div>
<div style="position:absolute;left:526px;top:660px;font-size:14.4px;color:#6ab42e;line-height:20px;white-space:nowrap;">4.3 (4.7)</div>
<div style="position:absolute;left:606px;top:660px;font-size:14.4px;color:#454e5a;line-height:20px;white-space:nowrap;">0 (4)</div>
<div style="position:absolute;left:686px;top:660px;font-size:14.4px;color:#454e5a;line-height:20px;white-space:nowrap;">0 (4.5)</div>
<div style="position:absolute;left:766px;top:660px;font-size:14.4px;color:#454e5a;line-height:20px;white-space:nowrap;">0 (4.6)</div>
<div style="position:absolute;left:846px;top:660px;font-size:14.4px;color:#454e5a;line-height:20px;white-space:nowrap;">0 (6.5)</div>
<div style="position:absolute;left:926px;top:660px;font-size:14.4px;color:#454e5a;line-height:20px;white-space:nowrap;">0 (6.6)</div>
<div style="position:absolute;left:1006px;top:660px;font-size:14.4px;color:#5a6cb8;line-height:20px;white-space:nowrap;">4.3 (6.5)</div>
<div style="position:absolute;left:1086px;top:660px;font-size:14.4px;color:#e01c1c;line-height:20px;white-space:nowrap;">4.2 (5.4)</div>
<div style="position:absolute;left:1166px;top:660px;font-size:14.4px;color:#ee9422;line-height:20px;white-space:nowrap;">4.4 (4.9)</div>
<div style="position:absolute;left:1246px;top:660px;font-size:14.4px;color:#6ab42e;line-height:20px;white-space:nowrap;">4.4 (4.8)</div>
<div style="position:absolute;left:1326px;top:660px;font-size:14.4px;color:#5a6cb8;line-height:20px;white-space:nowrap;">4.7 (7.2)</div>
<div style="position:absolute;left:1406px;top:660px;font-size:14.4px;color:#ee9422;line-height:20px;white-space:nowrap;">4.2 (5)</div>
<div style="position:absolute;left:1486px;top:660px;font-size:14.4px;color:#e040e0;line-height:20px;white-space:nowrap;">5.8 (5.8)</div>
<div style="position:absolute;left:1566px;top:660px;font-size:14.4px;color:#5a6cb8;line-height:20px;white-space:nowrap;">4.6 (7.1)</div>
<div style="position:absolute;left:1646px;top:660px;font-size:14.4px;color:#6ab42e;line-height:20px;white-space:nowrap;">4 (4.3)</div>
<div style="position:absolute;left:1726px;top:660px;font-size:14.4px;color:#ee9422;line-height:20px;white-space:nowrap;">4 (4.8)</div>
<div style="position:absolute;left:1806px;top:660px;font-size:14.4px;color:#5a6cb8;line-height:20px;white-space:nowrap;">0.2 (5.6)</div>
<div style="position:absolute;left:375px;top:684px;width:70px;height:22px;background:#2f5278;border-top:1px solid #f0f6fc;border-left:1px solid #f0f6fc;border-right:1px solid #c9c9c9;font-size:14.2px;font-style:italic;color:#8ab4dc;line-height:20px;padding-left:2px;white-space:nowrap;">8 Knots</div>
<div style="position:absolute;left:446px;top:684px;font-size:14.4px;color:#454e5a;line-height:20px;white-space:nowrap;">0 (5.4)</div>
<div style="position:absolute;left:526px;top:684px;font-size:14.4px;color:#454e5a;line-height:20px;white-space:nowrap;">0 (5)</div>
<div style="position:absolute;left:606px;top:684px;font-size:14.4px;color:#454e5a;line-height:20px;white-space:nowrap;">0 (5.8)</div>
<div style="position:absolute;left:686px;top:684px;font-size:14.4px;color:#454e5a;line-height:20px;white-space:nowrap;">0 (5.9)</div>
<div style="position:absolute;left:766px;top:684px;font-size:14.4px;color:#454e5a;line-height:20px;white-space:nowrap;">0 (6.2)</div>
<div style="position:absolute;left:846px;top:684px;font-size:14.4px;color:#454e5a;line-height:20px;white-space:nowrap;">0 (6)</div>
<div style="position:absolute;left:926px;top:684px;font-size:14.4px;color:#ee9422;line-height:20px;white-space:nowrap;">4.4 (5.4)</div>
<div style="position:absolute;left:1006px;top:684px;font-size:14.4px;color:#5a6cb8;line-height:20px;white-space:nowrap;">4.9 (7.1)</div>
<div style="position:absolute;left:1086px;top:684px;font-size:14.4px;color:#6ab42e;line-height:20px;white-space:nowrap;">5.8 (5.9)</div>
<div style="position:absolute;left:1166px;top:684px;font-size:14.4px;color:#ee9422;line-height:20px;white-space:nowrap;">6.1 (7)</div>
<div style="position:absolute;left:1246px;top:684px;font-size:14.4px;color:#6ab42e;line-height:20px;white-space:nowrap;">6.4 (7)</div>
<div style="position:absolute;left:1326px;top:684px;font-size:14.4px;color:#ee9422;line-height:20px;white-space:nowrap;">6.3 (7.2)</div>
<div style="position:absolute;left:1406px;top:684px;font-size:14.4px;color:#ee9422;line-height:20px;white-space:nowrap;">6.4 (7.4)</div>
<div style="position:absolute;left:1486px;top:684px;font-size:14.4px;color:#ee9422;line-height:20px;white-space:nowrap;">6.3 (7.3)</div>
<div style="position:absolute;left:1566px;top:684px;font-size:14.4px;color:#ee9422;line-height:20px;white-space:nowrap;">6.3 (7.7)</div>
<div style="position:absolute;left:1646px;top:684px;font-size:14.4px;color:#e01c1c;line-height:20px;white-space:nowrap;">5.9 (7.7)</div>
<div style="position:absolute;left:1726px;top:684px;font-size:14.4px;color:#454e5a;line-height:20px;white-space:nowrap;">0 (7.9)</div>
<div style="position:absolute;left:1806px;top:684px;font-size:14.4px;color:#e01c1c;line-height:20px;white-space:nowrap;">4.7 (6.6)</div>
<div style="position:absolute;left:375px;top:708px;width:70px;height:22px;background:#2f5278;border-top:1px solid #f0f6fc;border-left:1px solid #f0f6fc;border-right:1px solid #c9c9c9;font-size:14.2px;font-style:italic;color:#8ab4dc;line-height:20px;padding-left:2px;white-space:nowrap;">10 Knots</div>
<div style="position:absolute;left:446px;top:708px;font-size:14.4px;color:#e01c1c;line-height:20px;white-space:nowrap;">6.4 (8)</div>
<div style="position:absolute;left:526px;top:708px;font-size:14.4px;color:#454e5a;line-height:20px;white-space:nowrap;">0 (7.2)</div>
<div style="position:absolute;left:606px;top:708px;font-size:14.4px;color:#e040e0;line-height:20px;white-space:nowrap;">6.8 (6.8)</div>
<div style="position:absolute;left:686px;top:708px;font-size:14.4px;color:#454e5a;line-height:20px;white-space:nowrap;">0 (7.2)</div>
<div style="position:absolute;left:766px;top:708px;font-size:14.4px;color:#e040e0;line-height:20px;white-space:nowrap;">7.7 (7.7)</div>
<div style="position:absolute;left:846px;top:708px;font-size:14.4px;color:#e01c1c;line-height:20px;white-space:nowrap;">5.4 (7.6)</div>
<div style="position:absolute;left:926px;top:708px;font-size:14.4px;color:#e040e0;line-height:20px;white-space:nowrap;">6.1 (6.1)</div>
<div style="position:absolute;left:1006px;top:708px;font-size:14.4px;color:#6ab42e;line-height:20px;white-space:nowrap;">6.1 (6.5)</div>
<div style="position:absolute;left:1086px;top:708px;font-size:14.4px;color:#e040e0;line-height:20px;white-space:nowrap;">6.5 (6.5)</div>
<div style="position:absolute;left:1166px;top:708px;font-size:14.4px;color:#6ab42e;line-height:20px;white-space:nowrap;">6.6 (7.2)</div>
<div style="position:absolute;left:1246px;top:708px;font-size:14.4px;color:#ee9422;line-height:20px;white-space:nowrap;">6.7 (7.5)</div>
<div style="position:absolute;left:1326px;top:708px;font-size:14.4px;color:#ee9422;line-height:20px;white-space:nowrap;">6.7 (7.7)</div>
<div style="position:absolute;left:1406px;top:708px;font-size:14.4px;color:#6ab42e;line-height:20px;white-space:nowrap;">6.7 (7.4)</div>
<div style="position:absolute;left:1486px;top:708px;font-size:14.4px;color:#6ab42e;line-height:20px;white-space:nowrap;">7 (7.4)</div>
<div style="position:absolute;left:1566px;top:708px;font-size:14.4px;color:#ee9422;line-height:20px;white-space:nowrap;">6.3 (7.7)</div>
<div style="position:absolute;left:1646px;top:708px;font-size:14.4px;color:#ee9422;line-height:20px;white-space:nowrap;">6.9 (7.7)</div>
<div style="position:absolute;left:1726px;top:708px;font-size:14.4px;color:#ee9422;line-height:20px;white-space:nowrap;">6.9 (7.7)</div>
<div style="position:absolute;left:1806px;top:708px;font-size:14.4px;color:#6ab42e;line-height:20px;white-space:nowrap;">7.5 (7.9)</div>
<div style="position:absolute;left:375px;top:732px;width:70px;height:22px;background:#2f5278;border-top:1px solid #f0f6fc;border-left:1px solid #f0f6fc;border-right:1px solid #c9c9c9;font-size:14.2px;font-style:italic;color:#8ab4dc;line-height:20px;padding-left:2px;white-space:nowrap;">12 Knots</div>
<div style="position:absolute;left:446px;top:732px;font-size:14.4px;color:#ee9422;line-height:20px;white-space:nowrap;">6.2 (7)</div>
<div style="position:absolute;left:526px;top:732px;font-size:14.4px;color:#454e5a;line-height:20px;white-space:nowrap;">0 (7.5)</div>
<div style="position:absolute;left:606px;top:732px;font-size:14.4px;color:#454e5a;line-height:20px;white-space:nowrap;">0 (7.4)</div>
<div style="position:absolute;left:686px;top:732px;font-size:14.4px;color:#454e5a;line-height:20px;white-space:nowrap;">0 (7.1)</div>
<div style="position:absolute;left:766px;top:732px;font-size:14.4px;color:#454e5a;line-height:20px;white-space:nowrap;">0 (7.6)</div>
<div style="position:absolute;left:846px;top:732px;font-size:14.4px;color:#454e5a;line-height:20px;white-space:nowrap;">0 (6.2)</div>
<div style="position:absolute;left:926px;top:732px;font-size:14.4px;color:#6ab42e;line-height:20px;white-space:nowrap;">7 (7.1)</div>
<div style="position:absolute;left:1006px;top:732px;font-size:14.4px;color:#ee9422;line-height:20px;white-space:nowrap;">6.6 (7.4)</div>
<div style="position:absolute;left:1086px;top:732px;font-size:14.4px;color:#6ab42e;line-height:20px;white-space:nowrap;">6.7 (7.1)</div>
<div style="position:absolute;left:1166px;top:732px;font-size:14.4px;color:#6ab42e;line-height:20px;white-space:nowrap;">6.9 (7.3)</div>
<div style="position:absolute;left:1246px;top:732px;font-size:14.4px;color:#6ab42e;line-height:20px;white-space:nowrap;">7.1 (7.2)</div>
<div style="position:absolute;left:1326px;top:732px;font-size:14.4px;color:#6ab42e;line-height:20px;white-space:nowrap;">7 (7.5)</div>
<div style="position:absolute;left:1406px;top:732px;font-size:14.4px;color:#6ab42e;line-height:20px;white-space:nowrap;">7.4 (7.9)</div>
<div style="position:absolute;left:1486px;top:732px;font-size:14.4px;color:#e040e0;line-height:20px;white-space:nowrap;">7.5 (7.5)</div>
<div style="position:absolute;left:1566px;top:732px;font-size:14.4px;color:#6ab42e;line-height:20px;white-space:nowrap;">7.5 (7.8)</div>
<div style="position:absolute;left:1646px;top:732px;font-size:14.4px;color:#6ab42e;line-height:20px;white-space:nowrap;">7.6 (8)</div>
<div style="position:absolute;left:1726px;top:732px;font-size:14.4px;color:#ee9422;line-height:20px;white-space:nowrap;">7 (8.2)</div>
<div style="position:absolute;left:1806px;top:732px;font-size:14.4px;color:#e040e0;line-height:20px;white-space:nowrap;">7.9 (7.9)</div>
<div style="position:absolute;left:375px;top:756px;width:70px;height:22px;background:#2f5278;border-top:1px solid #f0f6fc;border-left:1px solid #f0f6fc;border-right:1px solid #c9c9c9;font-size:14.2px;font-style:italic;color:#8ab4dc;line-height:20px;padding-left:2px;white-space:nowrap;">14 Knots</div>
<div style="position:absolute;left:446px;top:756px;font-size:14.4px;color:#454e5a;line-height:20px;white-space:nowrap;">0 (7.5)</div>
<div style="position:absolute;left:526px;top:756px;font-size:14.4px;color:#454e5a;line-height:20px;white-space:nowrap;">0 (7.7)</div>
<div style="position:absolute;left:606px;top:756px;font-size:14.4px;color:#454e5a;line-height:20px;white-space:nowrap;">0 (6.6)</div>
<div style="position:absolute;left:686px;top:756px;font-size:14.4px;color:#ee9422;line-height:20px;white-space:nowrap;">6.7 (7.5)</div>
<div style="position:absolute;left:766px;top:756px;font-size:14.4px;color:#454e5a;line-height:20px;white-space:nowrap;">0 (6.6)</div>
<div style="position:absolute;left:846px;top:756px;font-size:14.4px;color:#454e5a;line-height:20px;white-space:nowrap;">0 (6.5)</div>
<div style="position:absolute;left:926px;top:756px;font-size:14.4px;color:#454e5a;line-height:20px;white-space:nowrap;">0 (7)</div>
<div style="position:absolute;left:1006px;top:756px;font-size:14.4px;color:#454e5a;line-height:20px;white-space:nowrap;">0 (7.4)</div>
<div style="position:absolute;left:1086px;top:756px;font-size:14.4px;color:#ee9422;line-height:20px;white-space:nowrap;">6.4 (7.4)</div>
<div style="position:absolute;left:1166px;top:756px;font-size:14.4px;color:#e040e0;line-height:20px;white-space:nowrap;">7.6 (7.6)</div>
<div style="position:absolute;left:1246px;top:756px;font-size:14.4px;color:#e040e0;line-height:20px;white-space:nowrap;">7.6 (7.6)</div>
<div style="position:absolute;left:1326px;top:756px;font-size:14.4px;color:#e040e0;line-height:20px;white-space:nowrap;">7.7 (7.7)</div>
<div style="position:absolute;left:1406px;top:756px;font-size:14.4px;color:#6ab42e;line-height:20px;white-space:nowrap;">7.6 (7.8)</div>
<div style="position:absolute;left:1486px;top:756px;font-size:14.4px;color:#6ab42e;line-height:20px;white-space:nowrap;">7.4 (7.9)</div>
<div style="position:absolute;left:1566px;top:756px;font-size:14.4px;color:#6ab42e;line-height:20px;white-space:nowrap;">7.8 (8.1)</div>
<div style="position:absolute;left:1646px;top:756px;font-size:14.4px;color:#6ab42e;line-height:20px;white-space:nowrap;">7.6 (8)</div>
<div style="position:absolute;left:1726px;top:756px;font-size:14.4px;color:#454e5a;line-height:20px;white-space:nowrap;">0 (7.9)</div>
<div style="position:absolute;left:1806px;top:756px;font-size:14.4px;color:#6ab42e;line-height:20px;white-space:nowrap;">7.3 (7.7)</div>
<div style="position:absolute;left:375px;top:780px;width:70px;height:22px;background:#2f5278;border-top:1px solid #f0f6fc;border-left:1px solid #f0f6fc;border-right:1px solid #c9c9c9;font-size:14.2px;font-style:italic;color:#8ab4dc;line-height:20px;padding-left:2px;white-space:nowrap;">16 Knots</div>
<div style="position:absolute;left:446px;top:780px;font-size:14.4px;color:#454e5a;line-height:20px;white-space:nowrap;">0 (5.2)</div>
<div style="position:absolute;left:526px;top:780px;font-size:14.4px;color:#454e5a;line-height:20px;white-space:nowrap;">0 (6.6)</div>
<div style="position:absolute;left:606px;top:780px;font-size:14.4px;color:#454e5a;line-height:20px;white-space:nowrap;">0 (6.5)</div>
<div style="position:absolute;left:686px;top:780px;font-size:14.4px;color:#454e5a;line-height:20px;white-space:nowrap;">0 (5.6)</div>
<div style="position:absolute;left:766px;top:780px;font-size:14.4px;color:#454e5a;line-height:20px;white-space:nowrap;">0 (6.1)</div>
<div style="position:absolute;left:846px;top:780px;font-size:14.4px;color:#454e5a;line-height:20px;white-space:nowrap;">0 (7.3)</div>
<div style="position:absolute;left:926px;top:780px;font-size:14.4px;color:#454e5a;line-height:20px;white-space:nowrap;">0 (7.3)</div>
<div style="position:absolute;left:1006px;top:780px;font-size:14.4px;color:#454e5a;line-height:20px;white-space:nowrap;">0 (7.3)</div>
<div style="position:absolute;left:1086px;top:780px;font-size:14.4px;color:#454e5a;line-height:20px;white-space:nowrap;">0 (7.3)</div>
<div style="position:absolute;left:1166px;top:780px;font-size:14.4px;color:#6ab42e;line-height:20px;white-space:nowrap;">7.4 (7.6)</div>
<div style="position:absolute;left:1246px;top:780px;font-size:14.4px;color:#6ab42e;line-height:20px;white-space:nowrap;">7.3 (7.8)</div>
<div style="position:absolute;left:1326px;top:780px;font-size:14.4px;color:#ee9422;line-height:20px;white-space:nowrap;">6.4 (7.8)</div>
<div style="position:absolute;left:1406px;top:780px;font-size:14.4px;color:#ee9422;line-height:20px;white-space:nowrap;">6.6 (8)</div>
<div style="position:absolute;left:1486px;top:780px;font-size:14.4px;color:#6ab42e;line-height:20px;white-space:nowrap;">7.5 (8.2)</div>
<div style="position:absolute;left:1566px;top:780px;font-size:14.4px;color:#454e5a;line-height:20px;white-space:nowrap;">0 (8.3)</div>
<div style="position:absolute;left:1646px;top:780px;font-size:14.4px;color:#454e5a;line-height:20px;white-space:nowrap;">0 (8.3)</div>
<div style="position:absolute;left:1726px;top:780px;font-size:14.4px;color:#454e5a;line-height:20px;white-space:nowrap;">0 (8.2)</div>
<div style="position:absolute;left:1806px;top:780px;font-size:14.4px;color:#ee9422;line-height:20px;white-space:nowrap;">7.3 (8.3)</div>
<div style="position:absolute;left:375px;top:804px;width:70px;height:22px;background:#2f5278;border-top:1px solid #f0f6fc;border-left:1px solid #f0f6fc;border-right:1px solid #c9c9c9;font-size:14.2px;font-style:italic;color:#8ab4dc;line-height:20px;padding-left:2px;white-space:nowrap;">18 Knots</div>
<div style="position:absolute;left:446px;top:804px;font-size:14.4px;color:#454e5a;line-height:20px;white-space:nowrap;">0 (6.3)</div>
<div style="position:absolute;left:526px;top:804px;font-size:14.4px;color:#454e5a;line-height:20px;white-space:nowrap;">0 (5.9)</div>
<div style="position:absolute;left:606px;top:804px;font-size:14.4px;color:#454e5a;line-height:20px;white-space:nowrap;">0 (7.6)</div>
<div style="position:absolute;left:686px;top:804px;font-size:14.4px;color:#454e5a;line-height:20px;white-space:nowrap;">0 (6.2)</div>
<div style="position:absolute;left:766px;top:804px;font-size:14.4px;color:#454e5a;line-height:20px;white-space:nowrap;">0 (7.4)</div>
<div style="position:absolute;left:846px;top:804px;font-size:14.4px;color:#454e5a;line-height:20px;white-space:nowrap;">0 (7.6)</div>
<div style="position:absolute;left:926px;top:804px;font-size:14.4px;color:#454e5a;line-height:20px;white-space:nowrap;">0 (7.5)</div>
<div style="position:absolute;left:1006px;top:804px;font-size:14.4px;color:#454e5a;line-height:20px;white-space:nowrap;">0 (7.4)</div>
<div style="position:absolute;left:1086px;top:804px;font-size:14.4px;color:#454e5a;line-height:20px;white-space:nowrap;">0 (7.4)</div>
<div style="position:absolute;left:1166px;top:804px;font-size:14.4px;color:#454e5a;line-height:20px;white-space:nowrap;">0 (7.7)</div>
<div style="position:absolute;left:1246px;top:804px;font-size:14.4px;color:#454e5a;line-height:20px;white-space:nowrap;">0 (7.7)</div>
<div style="position:absolute;left:1326px;top:804px;font-size:14.4px;color:#454e5a;line-height:20px;white-space:nowrap;">0 (7.8)</div>
<div style="position:absolute;left:1406px;top:804px;font-size:14.4px;color:#454e5a;line-height:20px;white-space:nowrap;">0 (8)</div>
<div style="position:absolute;left:1486px;top:804px;font-size:14.4px;color:#454e5a;line-height:20px;white-space:nowrap;">0 (8.2)</div>
<div style="position:absolute;left:1566px;top:804px;font-size:14.4px;color:#454e5a;line-height:20px;white-space:nowrap;">0 (8.3)</div>
<div style="position:absolute;left:1646px;top:804px;font-size:14.4px;color:#454e5a;line-height:20px;white-space:nowrap;">0 (8.4)</div>
<div style="position:absolute;left:1726px;top:804px;font-size:14.4px;color:#454e5a;line-height:20px;white-space:nowrap;">0 (8.9)</div>
<div style="position:absolute;left:1806px;top:804px;font-size:14.4px;color:#454e5a;line-height:20px;white-space:nowrap;">0 (8.3)</div>
<div style="position:absolute;left:375px;top:828px;width:70px;height:22px;background:#2f5278;border-top:1px solid #f0f6fc;border-left:1px solid #f0f6fc;border-right:1px solid #c9c9c9;font-size:14.2px;font-style:italic;color:#8ab4dc;line-height:20px;padding-left:2px;white-space:nowrap;">20 Knots</div>
<div style="position:absolute;left:446px;top:828px;font-size:14.4px;color:#454e5a;line-height:20px;white-space:nowrap;">0 (4.8)</div>
<div style="position:absolute;left:526px;top:828px;font-size:14.4px;color:#454e5a;line-height:20px;white-space:nowrap;">0 (7.2)</div>
<div style="position:absolute;left:606px;top:828px;font-size:14.4px;color:#454e5a;line-height:20px;white-space:nowrap;">0 (5.6)</div>
<div style="position:absolute;left:686px;top:828px;font-size:14.4px;color:#454e5a;line-height:20px;white-space:nowrap;">0 (6)</div>
<div style="position:absolute;left:766px;top:828px;font-size:14.4px;color:#454e5a;line-height:20px;white-space:nowrap;">0 (7.4)</div>
<div style="position:absolute;left:846px;top:828px;font-size:14.4px;color:#454e5a;line-height:20px;white-space:nowrap;">0 (7.3)</div>
<div style="position:absolute;left:926px;top:828px;font-size:14.4px;color:#454e5a;line-height:20px;white-space:nowrap;">0 (7.7)</div>
<div style="position:absolute;left:1006px;top:828px;font-size:14.4px;color:#454e5a;line-height:20px;white-space:nowrap;">0 (7.2)</div>
<div style="position:absolute;left:1086px;top:828px;font-size:14.4px;color:#454e5a;line-height:20px;white-space:nowrap;">0 (7.7)</div>
<div style="position:absolute;left:1166px;top:828px;font-size:14.4px;color:#454e5a;line-height:20px;white-space:nowrap;">0 (8)</div>
<div style="position:absolute;left:1246px;top:828px;font-size:14.4px;color:#454e5a;line-height:20px;white-space:nowrap;">0 (7.7)</div>
<div style="position:absolute;left:1326px;top:828px;font-size:14.4px;color:#454e5a;line-height:20px;white-space:nowrap;">0 (7.9)</div>
<div style="position:absolute;left:1406px;top:828px;font-size:14.4px;color:#454e5a;line-height:20px;white-space:nowrap;">0 (8.1)</div>
<div style="position:absolute;left:1486px;top:828px;font-size:14.4px;color:#454e5a;line-height:20px;white-space:nowrap;">0 (7.8)</div>
<div style="position:absolute;left:1566px;top:828px;font-size:14.4px;color:#454e5a;line-height:20px;white-space:nowrap;">0 (8.4)</div>
<div style="position:absolute;left:1646px;top:828px;font-size:14.4px;color:#454e5a;line-height:20px;white-space:nowrap;">0 (8.1)</div>
<div style="position:absolute;left:1726px;top:828px;font-size:14.4px;color:#454e5a;line-height:20px;white-space:nowrap;">0 (7.9)</div>
<div style="position:absolute;left:1806px;top:828px;font-size:14.4px;color:#454e5a;line-height:20px;white-space:nowrap;">0 (9.1)</div>
<div style="position:absolute;left:375px;top:852px;width:70px;height:22px;background:#2f5278;border-top:1px solid #f0f6fc;border-left:1px solid #f0f6fc;border-right:1px solid #c9c9c9;font-size:14.2px;font-style:italic;color:#8ab4dc;line-height:20px;padding-left:2px;white-space:nowrap;">22 Knots</div>
<div style="position:absolute;left:446px;top:852px;font-size:14.4px;color:#454e5a;line-height:20px;white-space:nowrap;">0 (6.5)</div>
<div style="position:absolute;left:526px;top:852px;font-size:14.4px;color:#454e5a;line-height:20px;white-space:nowrap;">0 (3.4)</div>
<div style="position:absolute;left:606px;top:852px;font-size:14.4px;color:#454e5a;line-height:20px;white-space:nowrap;">0 (7)</div>
<div style="position:absolute;left:686px;top:852px;font-size:14.4px;color:#454e5a;line-height:20px;white-space:nowrap;">0 (7.8)</div>
<div style="position:absolute;left:766px;top:852px;font-size:14.4px;color:#454e5a;line-height:20px;white-space:nowrap;">0 (7.3)</div>
<div style="position:absolute;left:846px;top:852px;font-size:14.4px;color:#454e5a;line-height:20px;white-space:nowrap;">0 (7.1)</div>
<div style="position:absolute;left:926px;top:852px;font-size:14.4px;color:#454e5a;line-height:20px;white-space:nowrap;">0 (7.6)</div>
<div style="position:absolute;left:1006px;top:852px;font-size:14.4px;color:#454e5a;line-height:20px;white-space:nowrap;">0 (7.4)</div>
<div style="position:absolute;left:1086px;top:852px;font-size:14.4px;color:#454e5a;line-height:20px;white-space:nowrap;">0 (7.7)</div>
<div style="position:absolute;left:1166px;top:852px;font-size:14.4px;color:#454e5a;line-height:20px;white-space:nowrap;">0 (8)</div>
<div style="position:absolute;left:1246px;top:852px;font-size:14.4px;color:#454e5a;line-height:20px;white-space:nowrap;">0 (7.7)</div>
<div style="position:absolute;left:1326px;top:852px;font-size:14.4px;color:#454e5a;line-height:20px;white-space:nowrap;">0 (8.2)</div>
<div style="position:absolute;left:1406px;top:852px;font-size:14.4px;color:#454e5a;line-height:20px;white-space:nowrap;">0 (7.5)</div>
<div style="position:absolute;left:1486px;top:852px;font-size:14.4px;color:#454e5a;line-height:20px;white-space:nowrap;">0 (7)</div>
<div style="position:absolute;left:1566px;top:852px;font-size:14.4px;color:#454e5a;line-height:20px;white-space:nowrap;">0 (8)</div>
<div style="position:absolute;left:1646px;top:852px;font-size:14.4px;color:#454e5a;line-height:20px;white-space:nowrap;">0 (7.7)</div>
<div style="position:absolute;left:1726px;top:852px;font-size:14.4px;color:#454e5a;line-height:20px;white-space:nowrap;">0 (8)</div>
<div style="position:absolute;left:1806px;top:852px;font-size:14.4px;color:#454e5a;line-height:20px;white-space:nowrap;">0 (7.4)</div>
<div style="position:absolute;left:375px;top:876px;width:70px;height:22px;background:#2f5278;border-top:1px solid #f0f6fc;border-left:1px solid #f0f6fc;border-right:1px solid #c9c9c9;font-size:14.2px;font-style:italic;color:#8ab4dc;line-height:20px;padding-left:2px;white-space:nowrap;">24 Knots</div>
<div style="position:absolute;left:446px;top:876px;font-size:14.4px;color:#454e5a;line-height:20px;white-space:nowrap;">0 (3)</div>
<div style="position:absolute;left:526px;top:876px;font-size:14.4px;color:#454e5a;line-height:20px;white-space:nowrap;">0 (0)</div>
<div style="position:absolute;left:606px;top:876px;font-size:14.4px;color:#454e5a;line-height:20px;white-space:nowrap;">0 (6.4)</div>
<div style="position:absolute;left:686px;top:876px;font-size:14.4px;color:#454e5a;line-height:20px;white-space:nowrap;">0 (7)</div>
<div style="position:absolute;left:766px;top:876px;font-size:14.4px;color:#454e5a;line-height:20px;white-space:nowrap;">0 (6.1)</div>
<div style="position:absolute;left:846px;top:876px;font-size:14.4px;color:#454e5a;line-height:20px;white-space:nowrap;">0 (6.3)</div>
<div style="position:absolute;left:926px;top:876px;font-size:14.4px;color:#454e5a;line-height:20px;white-space:nowrap;">0 (7.4)</div>
<div style="position:absolute;left:1006px;top:876px;font-size:14.4px;color:#454e5a;line-height:20px;white-space:nowrap;">0 (7.1)</div>
<div style="position:absolute;left:1086px;top:876px;font-size:14.4px;color:#454e5a;line-height:20px;white-space:nowrap;">0 (7.9)</div>
<div style="position:absolute;left:1166px;top:876px;font-size:14.4px;color:#454e5a;line-height:20px;white-space:nowrap;">0 (5.8)</div>
<div style="position:absolute;left:1246px;top:876px;font-size:14.4px;color:#454e5a;line-height:20px;white-space:nowrap;">0 (6.8)</div>
<div style="position:absolute;left:1326px;top:876px;font-size:14.4px;color:#454e5a;line-height:20px;white-space:nowrap;">0 (0)</div>
<div style="position:absolute;left:1406px;top:876px;font-size:14.4px;color:#454e5a;line-height:20px;white-space:nowrap;">0 (0)</div>
<div style="position:absolute;left:1486px;top:876px;font-size:14.4px;color:#454e5a;line-height:20px;white-space:nowrap;">0 (8.4)</div>
<div style="position:absolute;left:1566px;top:876px;font-size:14.4px;color:#454e5a;line-height:20px;white-space:nowrap;">0 (0)</div>
<div style="position:absolute;left:1646px;top:876px;font-size:14.4px;color:#454e5a;line-height:20px;white-space:nowrap;">0 (0)</div>
<div style="position:absolute;left:1726px;top:876px;font-size:14.4px;color:#454e5a;line-height:20px;white-space:nowrap;">0 (8.6)</div>
<div style="position:absolute;left:1806px;top:876px;font-size:14.4px;color:#454e5a;line-height:20px;white-space:nowrap;">0 (0)</div>
<div style="position:absolute;left:375px;top:900px;width:70px;height:22px;background:#2f5278;border-top:1px solid #f0f6fc;border-left:1px solid #f0f6fc;border-right:1px solid #c9c9c9;font-size:14.2px;font-style:italic;color:#8ab4dc;line-height:20px;padding-left:2px;white-space:nowrap;">26 Knots</div>
<div style="position:absolute;left:446px;top:900px;font-size:14.4px;color:#454e5a;line-height:20px;white-space:nowrap;">0 (0)</div>
<div style="position:absolute;left:526px;top:900px;font-size:14.4px;color:#454e5a;line-height:20px;white-space:nowrap;">0 (0)</div>
<div style="position:absolute;left:606px;top:900px;font-size:14.4px;color:#454e5a;line-height:20px;white-space:nowrap;">0 (0)</div>
<div style="position:absolute;left:686px;top:900px;font-size:14.4px;color:#454e5a;line-height:20px;white-space:nowrap;">0 (0)</div>
<div style="position:absolute;left:766px;top:900px;font-size:14.4px;color:#454e5a;line-height:20px;white-space:nowrap;">0 (0)</div>
<div style="position:absolute;left:846px;top:900px;font-size:14.4px;color:#454e5a;line-height:20px;white-space:nowrap;">0 (0)</div>
<div style="position:absolute;left:926px;top:900px;font-size:14.4px;color:#454e5a;line-height:20px;white-space:nowrap;">0 (0)</div>
<div style="position:absolute;left:1006px;top:900px;font-size:14.4px;color:#454e5a;line-height:20px;white-space:nowrap;">0 (6.6)</div>
<div style="position:absolute;left:1086px;top:900px;font-size:14.4px;color:#454e5a;line-height:20px;white-space:nowrap;">0 (7.6)</div>
<div style="position:absolute;left:1166px;top:900px;font-size:14.4px;color:#454e5a;line-height:20px;white-space:nowrap;">0 (0)</div>
<div style="position:absolute;left:1246px;top:900px;font-size:14.4px;color:#454e5a;line-height:20px;white-space:nowrap;">0 (0)</div>
<div style="position:absolute;left:1326px;top:900px;font-size:14.4px;color:#454e5a;line-height:20px;white-space:nowrap;">0 (0)</div>
<div style="position:absolute;left:1406px;top:900px;font-size:14.4px;color:#454e5a;line-height:20px;white-space:nowrap;">0 (0)</div>
<div style="position:absolute;left:1486px;top:900px;font-size:14.4px;color:#454e5a;line-height:20px;white-space:nowrap;">0 (0)</div>
<div style="position:absolute;left:1566px;top:900px;font-size:14.4px;color:#454e5a;line-height:20px;white-space:nowrap;">0 (0)</div>
<div style="position:absolute;left:1646px;top:900px;font-size:14.4px;color:#454e5a;line-height:20px;white-space:nowrap;">0 (4.9)</div>
<div style="position:absolute;left:1726px;top:900px;font-size:14.4px;color:#454e5a;line-height:20px;white-space:nowrap;">0 (0)</div>
<div style="position:absolute;left:1806px;top:900px;font-size:14.4px;color:#454e5a;line-height:20px;white-space:nowrap;">0 (0)</div>
<div style="position:absolute;left:375px;top:924px;width:70px;height:22px;background:#2f5278;border-top:1px solid #f0f6fc;border-left:1px solid #f0f6fc;border-right:1px solid #c9c9c9;font-size:14.2px;font-style:italic;color:#8ab4dc;line-height:20px;padding-left:2px;white-space:nowrap;">28 Knots</div>
<div style="position:absolute;left:446px;top:924px;font-size:14.4px;color:#454e5a;line-height:20px;white-space:nowrap;">0 (0)</div>
<div style="position:absolute;left:526px;top:924px;font-size:14.4px;color:#454e5a;line-height:20px;white-space:nowrap;">0 (0)</div>
<div style="position:absolute;left:606px;top:924px;font-size:14.4px;color:#454e5a;line-height:20px;white-space:nowrap;">0 (0)</div>
<div style="position:absolute;left:686px;top:924px;font-size:14.4px;color:#454e5a;line-height:20px;white-space:nowrap;">0 (0)</div>
<div style="position:absolute;left:766px;top:924px;font-size:14.4px;color:#454e5a;line-height:20px;white-space:nowrap;">0 (0)</div>
<div style="position:absolute;left:846px;top:924px;font-size:14.4px;color:#454e5a;line-height:20px;white-space:nowrap;">0 (0)</div>
<div style="position:absolute;left:926px;top:924px;font-size:14.4px;color:#454e5a;line-height:20px;white-space:nowrap;">0 (0)</div>
<div style="position:absolute;left:1006px;top:924px;font-size:14.4px;color:#454e5a;line-height:20px;white-space:nowrap;">0 (0)</div>
<div style="position:absolute;left:1086px;top:924px;font-size:14.4px;color:#454e5a;line-height:20px;white-space:nowrap;">0 (0)</div>
<div style="position:absolute;left:1166px;top:924px;font-size:14.4px;color:#454e5a;line-height:20px;white-space:nowrap;">0 (0)</div>
<div style="position:absolute;left:1246px;top:924px;font-size:14.4px;color:#454e5a;line-height:20px;white-space:nowrap;">0 (0)</div>
<div style="position:absolute;left:1326px;top:924px;font-size:14.4px;color:#454e5a;line-height:20px;white-space:nowrap;">0 (0)</div>
<div style="position:absolute;left:1406px;top:924px;font-size:14.4px;color:#454e5a;line-height:20px;white-space:nowrap;">0 (0)</div>
<div style="position:absolute;left:1486px;top:924px;font-size:14.4px;color:#454e5a;line-height:20px;white-space:nowrap;">0 (0)</div>
<div style="position:absolute;left:1566px;top:924px;font-size:14.4px;color:#454e5a;line-height:20px;white-space:nowrap;">0 (0)</div>
<div style="position:absolute;left:1646px;top:924px;font-size:14.4px;color:#454e5a;line-height:20px;white-space:nowrap;">0 (0)</div>
<div style="position:absolute;left:1726px;top:924px;font-size:14.4px;color:#454e5a;line-height:20px;white-space:nowrap;">0 (0)</div>
<div style="position:absolute;left:1806px;top:924px;font-size:14.4px;color:#454e5a;line-height:20px;white-space:nowrap;">0 (0)</div>
<div style="position:absolute;left:375px;top:948px;width:70px;height:22px;background:#2f5278;border-top:1px solid #f0f6fc;border-left:1px solid #f0f6fc;border-right:1px solid #c9c9c9;font-size:14.2px;font-style:italic;color:#8ab4dc;line-height:20px;padding-left:2px;white-space:nowrap;">30 Knots</div>
<div style="position:absolute;left:446px;top:948px;font-size:14.4px;color:#454e5a;line-height:20px;white-space:nowrap;">0 (0)</div>
<div style="position:absolute;left:526px;top:948px;font-size:14.4px;color:#454e5a;line-height:20px;white-space:nowrap;">0 (0)</div>
<div style="position:absolute;left:606px;top:948px;font-size:14.4px;color:#454e5a;line-height:20px;white-space:nowrap;">0 (0)</div>
<div style="position:absolute;left:686px;top:948px;font-size:14.4px;color:#454e5a;line-height:20px;white-space:nowrap;">0 (0)</div>
<div style="position:absolute;left:766px;top:948px;font-size:14.4px;color:#454e5a;line-height:20px;white-space:nowrap;">0 (0)</div>
<div style="position:absolute;left:846px;top:948px;font-size:14.4px;color:#454e5a;line-height:20px;white-space:nowrap;">0 (0)</div>
<div style="position:absolute;left:926px;top:948px;font-size:14.4px;color:#454e5a;line-height:20px;white-space:nowrap;">0 (0)</div>
<div style="position:absolute;left:1006px;top:948px;font-size:14.4px;color:#454e5a;line-height:20px;white-space:nowrap;">0 (0)</div>
<div style="position:absolute;left:1086px;top:948px;font-size:14.4px;color:#454e5a;line-height:20px;white-space:nowrap;">0 (0)</div>
<div style="position:absolute;left:1166px;top:948px;font-size:14.4px;color:#454e5a;line-height:20px;white-space:nowrap;">0 (0)</div>
<div style="position:absolute;left:1246px;top:948px;font-size:14.4px;color:#454e5a;line-height:20px;white-space:nowrap;">0 (0)</div>
<div style="position:absolute;left:1326px;top:948px;font-size:14.4px;color:#454e5a;line-height:20px;white-space:nowrap;">0 (0)</div>
<div style="position:absolute;left:1406px;top:948px;font-size:14.4px;color:#454e5a;line-height:20px;white-space:nowrap;">0 (0)</div>
<div style="position:absolute;left:1486px;top:948px;font-size:14.4px;color:#454e5a;line-height:20px;white-space:nowrap;">0 (0)</div>
<div style="position:absolute;left:1566px;top:948px;font-size:14.4px;color:#454e5a;line-height:20px;white-space:nowrap;">0 (0)</div>
<div style="position:absolute;left:1646px;top:948px;font-size:14.4px;color:#454e5a;line-height:20px;white-space:nowrap;">0 (0)</div>
<div style="position:absolute;left:1726px;top:948px;font-size:14.4px;color:#454e5a;line-height:20px;white-space:nowrap;">0 (0)</div>
<div style="position:absolute;left:1806px;top:948px;font-size:14.4px;color:#454e5a;line-height:20px;white-space:nowrap;">0 (0)</div>
<div style="position:absolute;left:375px;top:972px;width:70px;height:22px;background:#2f5278;border-top:1px solid #f0f6fc;border-left:1px solid #f0f6fc;border-right:1px solid #c9c9c9;font-size:14.2px;font-style:italic;color:#8ab4dc;line-height:20px;padding-left:2px;white-space:nowrap;">32 Knots</div>
<div style="position:absolute;left:446px;top:972px;font-size:14.4px;color:#454e5a;line-height:20px;white-space:nowrap;">0 (0)</div>
<div style="position:absolute;left:526px;top:972px;font-size:14.4px;color:#454e5a;line-height:20px;white-space:nowrap;">0 (0)</div>
<div style="position:absolute;left:606px;top:972px;font-size:14.4px;color:#454e5a;line-height:20px;white-space:nowrap;">0 (0)</div>
<div style="position:absolute;left:686px;top:972px;font-size:14.4px;color:#454e5a;line-height:20px;white-space:nowrap;">0 (0)</div>
<div style="position:absolute;left:766px;top:972px;font-size:14.4px;color:#454e5a;line-height:20px;white-space:nowrap;">0 (0)</div>
<div style="position:absolute;left:846px;top:972px;font-size:14.4px;color:#454e5a;line-height:20px;white-space:nowrap;">0 (0)</div>
<div style="position:absolute;left:926px;top:972px;font-size:14.4px;color:#454e5a;line-height:20px;white-space:nowrap;">0 (0)</div>
<div style="position:absolute;left:1006px;top:972px;font-size:14.4px;color:#454e5a;line-height:20px;white-space:nowrap;">0 (0)</div>
<div style="position:absolute;left:1086px;top:972px;font-size:14.4px;color:#454e5a;line-height:20px;white-space:nowrap;">0 (0)</div>
<div style="position:absolute;left:1166px;top:972px;font-size:14.4px;color:#454e5a;line-height:20px;white-space:nowrap;">0 (0)</div>
<div style="position:absolute;left:1246px;top:972px;font-size:14.4px;color:#454e5a;line-height:20px;white-space:nowrap;">0 (0)</div>
<div style="position:absolute;left:1326px;top:972px;font-size:14.4px;color:#454e5a;line-height:20px;white-space:nowrap;">0 (0)</div>
<div style="position:absolute;left:1406px;top:972px;font-size:14.4px;color:#454e5a;line-height:20px;white-space:nowrap;">0 (0)</div>
<div style="position:absolute;left:1486px;top:972px;font-size:14.4px;color:#454e5a;line-height:20px;white-space:nowrap;">0 (0)</div>
<div style="position:absolute;left:1566px;top:972px;font-size:14.4px;color:#454e5a;line-height:20px;white-space:nowrap;">0 (0)</div>
<div style="position:absolute;left:1646px;top:972px;font-size:14.4px;color:#454e5a;line-height:20px;white-space:nowrap;">0 (0)</div>
<div style="position:absolute;left:1726px;top:972px;font-size:14.4px;color:#454e5a;line-height:20px;white-space:nowrap;">0 (0)</div>
<div style="position:absolute;left:1806px;top:972px;font-size:14.4px;color:#454e5a;line-height:20px;white-space:nowrap;">0 (0)</div>
<div style="position:absolute;left:375px;top:996px;width:70px;height:22px;background:#2f5278;border-top:1px solid #f0f6fc;border-left:1px solid #f0f6fc;border-right:1px solid #c9c9c9;font-size:14.2px;font-style:italic;color:#8ab4dc;line-height:20px;padding-left:2px;white-space:nowrap;">34 Knots</div>
<div style="position:absolute;left:446px;top:996px;font-size:14.4px;color:#454e5a;line-height:20px;white-space:nowrap;">0 (0)</div>
<div style="position:absolute;left:526px;top:996px;font-size:14.4px;color:#454e5a;line-height:20px;white-space:nowrap;">0 (0)</div>
<div style="position:absolute;left:606px;top:996px;font-size:14.4px;color:#454e5a;line-height:20px;white-space:nowrap;">0 (0)</div>
<div style="position:absolute;left:686px;top:996px;font-size:14.4px;color:#454e5a;line-height:20px;white-space:nowrap;">0 (0)</div>
<div style="position:absolute;left:766px;top:996px;font-size:14.4px;color:#454e5a;line-height:20px;white-space:nowrap;">0 (0)</div>
<div style="position:absolute;left:846px;top:996px;font-size:14.4px;color:#454e5a;line-height:20px;white-space:nowrap;">0 (0)</div>
<div style="position:absolute;left:926px;top:996px;font-size:14.4px;color:#454e5a;line-height:20px;white-space:nowrap;">0 (0)</div>
<div style="position:absolute;left:1006px;top:996px;font-size:14.4px;color:#454e5a;line-height:20px;white-space:nowrap;">0 (0)</div>
<div style="position:absolute;left:1086px;top:996px;font-size:14.4px;color:#454e5a;line-height:20px;white-space:nowrap;">0 (0)</div>
<div style="position:absolute;left:1166px;top:996px;font-size:14.4px;color:#454e5a;line-height:20px;white-space:nowrap;">0 (0)</div>
<div style="position:absolute;left:1246px;top:996px;font-size:14.4px;color:#454e5a;line-height:20px;white-space:nowrap;">0 (0)</div>
<div style="position:absolute;left:1326px;top:996px;font-size:14.4px;color:#454e5a;line-height:20px;white-space:nowrap;">0 (0)</div>
<div style="position:absolute;left:1406px;top:996px;font-size:14.4px;color:#454e5a;line-height:20px;white-space:nowrap;">0 (0)</div>
<div style="position:absolute;left:1486px;top:996px;font-size:14.4px;color:#454e5a;line-height:20px;white-space:nowrap;">0 (0)</div>
<div style="position:absolute;left:1566px;top:996px;font-size:14.4px;color:#454e5a;line-height:20px;white-space:nowrap;">0 (0)</div>
<div style="position:absolute;left:1646px;top:996px;font-size:14.4px;color:#454e5a;line-height:20px;white-space:nowrap;">0 (0)</div>
<div style="position:absolute;left:1726px;top:996px;font-size:14.4px;color:#454e5a;line-height:20px;white-space:nowrap;">0 (0)</div>
<div style="position:absolute;left:1806px;top:996px;font-size:14.4px;color:#454e5a;line-height:20px;white-space:nowrap;">0 (0)</div>
<div style="position:absolute;left:375px;top:1020px;width:70px;height:22px;background:#2f5278;border-top:1px solid #f0f6fc;border-left:1px solid #f0f6fc;border-right:1px solid #c9c9c9;font-size:14.2px;font-style:italic;color:#8ab4dc;line-height:20px;padding-left:2px;white-space:nowrap;">36 Knots</div>
<div style="position:absolute;left:446px;top:1020px;font-size:14.4px;color:#454e5a;line-height:20px;white-space:nowrap;">0 (0)</div>
<div style="position:absolute;left:526px;top:1020px;font-size:14.4px;color:#454e5a;line-height:20px;white-space:nowrap;">0 (0)</div>
<div style="position:absolute;left:606px;top:1020px;font-size:14.4px;color:#454e5a;line-height:20px;white-space:nowrap;">0 (0)</div>
<div style="position:absolute;left:686px;top:1020px;font-size:14.4px;color:#454e5a;line-height:20px;white-space:nowrap;">0 (0)</div>
<div style="position:absolute;left:766px;top:1020px;font-size:14.4px;color:#454e5a;line-height:20px;white-space:nowrap;">0 (0)</div>
<div style="position:absolute;left:846px;top:1020px;font-size:14.4px;color:#454e5a;line-height:20px;white-space:nowrap;">0 (0)</div>
<div style="position:absolute;left:926px;top:1020px;font-size:14.4px;color:#454e5a;line-height:20px;white-space:nowrap;">0 (0)</div>
<div style="position:absolute;left:1006px;top:1020px;font-size:14.4px;color:#454e5a;line-height:20px;white-space:nowrap;">0 (0)</div>
<div style="position:absolute;left:1086px;top:1020px;font-size:14.4px;color:#454e5a;line-height:20px;white-space:nowrap;">0 (0)</div>
<div style="position:absolute;left:1166px;top:1020px;font-size:14.4px;color:#454e5a;line-height:20px;white-space:nowrap;">0 (0)</div>
<div style="position:absolute;left:1246px;top:1020px;font-size:14.4px;color:#454e5a;line-height:20px;white-space:nowrap;">0 (0)</div>
<div style="position:absolute;left:1326px;top:1020px;font-size:14.4px;color:#454e5a;line-height:20px;white-space:nowrap;">0 (0)</div>
<div style="position:absolute;left:1406px;top:1020px;font-size:14.4px;color:#454e5a;line-height:20px;white-space:nowrap;">0 (0)</div>
<div style="position:absolute;left:1486px;top:1020px;font-size:14.4px;color:#454e5a;line-height:20px;white-space:nowrap;">0 (0)</div>
<div style="position:absolute;left:1566px;top:1020px;font-size:14.4px;color:#454e5a;line-height:20px;white-space:nowrap;">0 (0)</div>
<div style="position:absolute;left:1646px;top:1020px;font-size:14.4px;color:#454e5a;line-height:20px;white-space:nowrap;">0 (0)</div>
<div style="position:absolute;left:1726px;top:1020px;font-size:14.4px;color:#454e5a;line-height:20px;white-space:nowrap;">0 (0)</div>
<div style="position:absolute;left:1806px;top:1020px;font-size:14.4px;color:#454e5a;line-height:20px;white-space:nowrap;">0 (0)</div>
<div style="position:absolute;left:376px;top:1028px;width:1507px;height:12px;background:#dcdce4;border-top:1px solid #8a9ab0;"></div>
<div style="position:absolute;left:376px;top:1029px;width:69px;height:11px;background:#c9c9c9;"></div>
<div style="position:absolute;left:445px;top:1029px;width:15px;height:11px;background:#f6f6fa;"><svg width="15" height="11"><path d="M9 2 v8 l-4 -4z" fill="#111"/></svg></div>
<div style="position:absolute;left:461px;top:1029px;width:700px;height:11px;background:linear-gradient(#c8d8f8,#f4fcff 45%,#e0ecf8);border-left:1px solid #8a9ab0;border-right:1px solid #8a9ab0;"><svg width="8" height="11" style="position:absolute;left:346px;top:0"><path d="M1.5 3 v8 M3.5 3 v8 M5.5 3 v8" stroke="#5a6a7e" stroke-width="1"/></svg></div>
<div style="position:absolute;left:1161px;top:1029px;width:705px;height:11px;background:#f0eefa;"></div>
<div style="position:absolute;left:1866px;top:1029px;width:16px;height:11px;background:#f6f6fa;"><svg width="16" height="11"><path d="M6 2 v8 l4 -4z" fill="#111"/></svg></div>
<div style="position:absolute;left:1882px;top:590px;width:15px;height:450px;background:#c9c9c9;"></div>
<div style="position:absolute;left:1883px;top:611px;width:14px;height:417px;background:#f0eefa;border-left:1px solid #8a9ab0;"></div>
<div style="position:absolute;left:1883px;top:611px;width:14px;height:16px;background:#f6f6fa;border-bottom:1px solid #9aa6b6;"><svg width="14" height="16"><path d="M3 10 h8 l-4 -4z" fill="#111"/></svg></div>
<div style="position:absolute;left:1884px;top:627px;width:13px;height:334px;background:linear-gradient(90deg,#c8d8f8,#f4fcff 45%,#c4d4e4);border-bottom:1px solid #687890;"><svg width="13" height="8" style="position:absolute;left:0;top:163px"><path d="M3 1.5 h7 M3 3.5 h7 M3 5.5 h7" stroke="#5a6a7e" stroke-width="1"/></svg></div>
<div style="position:absolute;left:1883px;top:1012px;width:14px;height:16px;background:#f6f6fa;border-top:1px solid #9aa6b6;"><svg width="14" height="16"><path d="M3 6 h8 l-4 4z" fill="#111"/></svg></div>
<div style="position:absolute;left:0px;top:1040px;width:1920px;height:40px;background:#2b3a46;"></div>
<svg width="560" height="40" style="position:absolute;left:0;top:1040px" viewBox="0 1040 560 40">
<g fill="#ffffff"><path d="M16 1052.5 l7 -1 v7.6 h-7z"/><path d="M24 1051.3 l8.3 -1.2 v9 h-8.3z"/><path d="M16 1060 h7 v7.6 l-7 -1z"/><path d="M24 1060 h8.3 v9 l-8.3 -1.2z"/></g>
<circle cx="74.5" cy="1058" r="6" fill="none" stroke="#fff" stroke-width="1.3"/><path d="M70.5 1062.5 l-6.5 7" stroke="#fff" stroke-width="1.4"/>
<circle cx="120" cy="1060" r="6.8" fill="none" stroke="#fff" stroke-width="1.6"/>
<g stroke="#fff" stroke-width="1.3" fill="none"><path d="M160 1052 h9 M160 1066.5 h9"/><rect x="160.5" y="1055" width="8" height="8"/><path d="M174 1051.5 v1.5 M174 1056 v8 M174 1066 v1.5"/></g>
<path d="M208 1052 h8 l2 2 h12 v15 h-22z" fill="#f0c040"/><path d="M208 1056 h22 v13 h-22z" fill="#f8d868"/><rect x="213" y="1061" width="12" height="6" fill="#3a8ad8"/><rect x="216" y="1063" width="6" height="4" fill="#f8d868"/>
<circle cx="267.8" cy="1059.8" r="11.5" fill="#db4437"/><path d="M267.8 1059.8 L257.8 1054 A11.5 11.5 0 0 0 262 1069.7z" fill="#0f9d58"/><path d="M267.8 1059.8 L262 1069.7 A11.5 11.5 0 0 0 278.6 1056z" fill="#f4c20d"/><circle cx="267.8" cy="1059.8" r="5.2" fill="#fff"/><circle cx="267.8" cy="1059.8" r="4" fill="#4285f4"/><circle cx="274.3" cy="1066" r="7" fill="#5b2ea6"/><text x="274.3" y="1069" font-size="8" font-weight="bold" fill="#e8e0f8" text-anchor="middle" font-family="Liberation Sans">W</text>
<circle cx="317.3" cy="1059.4" r="11" fill="#2c2255"/><path d="M313 1049 a11 11 0 0 0 0 21" stroke="#e8a040" stroke-width="1.4" fill="none"/><rect x="306.5" y="1056" width="22" height="1.8" fill="#f0ecf8"/><rect x="306.5" y="1059.5" width="22" height="1.8" fill="#f0ecf8"/><rect x="306.5" y="1063" width="22" height="1.4" fill="#c8c0e8"/>
<circle cx="370" cy="1052" r="3" fill="#7b83eb"/><circle cx="375" cy="1054" r="2" fill="#5059c9"/><rect x="363" y="1055" width="14" height="12" rx="2" fill="#7b83eb"/><rect x="356" y="1054" width="11" height="11" rx="1" fill="#4b53bc"/><text x="361.5" y="1063" font-size="9" font-weight="bold" fill="#fff" text-anchor="middle" font-family="Liberation Sans">T</text><circle cx="374" cy="1067" r="4.5" fill="#92c353"/><path d="M371.5 1067 l1.7 1.7 l3 -3" stroke="#fff" stroke-width="1.1" fill="none"/>
<rect x="391" y="1040" width="48" height="40" fill="#c56a28"/><rect x="391" y="1077" width="48" height="3" fill="#f07a18"/>
<rect x="410" y="1049" width="16" height="20" rx="1" fill="#28a8ea"/><rect x="410" y="1049" width="16" height="8" fill="#0364b8"/><rect x="402" y="1053" width="13" height="13" rx="1" fill="#0a5ab5"/><circle cx="408.5" cy="1059.5" r="3.2" fill="none" stroke="#fff" stroke-width="1.4"/>
<rect x="454" y="1049" width="20" height="22" rx="2" fill="#f47e2e"/><rect x="454" y="1049" width="20" height="3" fill="#fb9a4e"/><path d="M458.5 1055 q3 -3 5.5 0 q2.5 -3 5.5 0 q2 3 0 5 q2 3 0 5 q-3 3 -5.5 0 q-2.5 3 -5.5 0 q-2 -2 0 -5 q-2 -2 0 -5z" fill="none" stroke="#fff" stroke-width="2"/>
<rect x="489" y="1040" width="44" height="40" fill="#4c5a66"/><rect x="501" y="1049" width="23" height="22" rx="2" fill="#eef0f4"/><path d="M512 1051 q-3 3 1 6 q2 2 -1 4" stroke="#e07020" stroke-width="1.2" fill="none"/><path d="M506 1063 h12 M507 1066 h10 M505 1068.5 h14" stroke="#5a7fa8" stroke-width="1.1"/>
<rect x="248" y="1078" width="40" height="2" fill="#a8c0e0"/>
<rect x="297" y="1078" width="40" height="2" fill="#a8c0e0"/>
<rect x="346" y="1078" width="40" height="2" fill="#a8c0e0"/>
<rect x="444" y="1078" width="40" height="2" fill="#a8c0e0"/>
<rect x="490" y="1078" width="46" height="2" fill="#a8c0e0"/>
</svg>
<div style="position:absolute;left:1845px;top:1043px;width:80px;text-align:center;color:#fff;font-size:11.5px;line-height:16px;">11:18<br>19/12/2022</div>
</body></html>
